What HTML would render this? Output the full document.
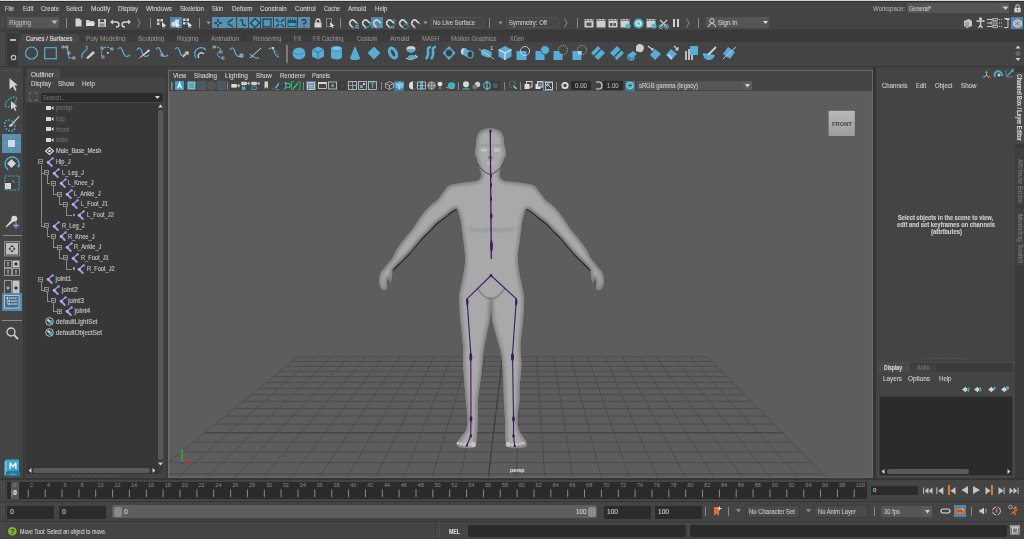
<!DOCTYPE html>
<html><head><meta charset="utf-8"><style>
html,body{margin:0;padding:0;}
body{width:1024px;height:539px;overflow:hidden;position:relative;background:#444444;font-family:"Liberation Sans",sans-serif;}
body>div,body>span,body>svg{position:absolute;}
.t{white-space:nowrap;line-height:1;transform-origin:0 0;-webkit-text-stroke:0.12px currentColor;}
svg{overflow:visible;}
</style></head><body>
<div style="left:0px;top:0px;width:1024px;height:1px;background:#d6d6d6;"></div>
<div style="left:0px;top:1px;width:1024px;height:1px;background:#2f2f2f;"></div>
<span class="t" style="left:5px;top:6px;font-size:6.6px;color:#cdcdcd;transform:scaleX(0.865);">File</span>
<span class="t" style="left:22.5px;top:6px;font-size:6.6px;color:#cdcdcd;transform:scaleX(0.923);">Edit</span>
<span class="t" style="left:40.7px;top:6px;font-size:6.6px;color:#cdcdcd;transform:scaleX(0.909);">Create</span>
<span class="t" style="left:66px;top:6px;font-size:6.6px;color:#cdcdcd;transform:scaleX(0.900);">Select</span>
<span class="t" style="left:90.7px;top:6px;font-size:6.6px;color:#cdcdcd;transform:scaleX(0.993);">Modify</span>
<span class="t" style="left:117.7px;top:6px;font-size:6.6px;color:#cdcdcd;transform:scaleX(0.924);">Display</span>
<span class="t" style="left:145.7px;top:6px;font-size:6.6px;color:#cdcdcd;transform:scaleX(0.971);">Windows</span>
<span class="t" style="left:179.7px;top:6px;font-size:6.6px;color:#cdcdcd;transform:scaleX(0.934);">Skeleton</span>
<span class="t" style="left:211.7px;top:6px;font-size:6.6px;color:#cdcdcd;transform:scaleX(0.880);">Skin</span>
<span class="t" style="left:231.5px;top:6px;font-size:6.6px;color:#cdcdcd;transform:scaleX(0.948);">Deform</span>
<span class="t" style="left:259.7px;top:6px;font-size:6.6px;color:#cdcdcd;transform:scaleX(0.949);">Constrain</span>
<span class="t" style="left:294.7px;top:6px;font-size:6.6px;color:#cdcdcd;transform:scaleX(0.978);">Control</span>
<span class="t" style="left:323.5px;top:6px;font-size:6.6px;color:#cdcdcd;transform:scaleX(0.849);">Cache</span>
<span class="t" style="left:347.7px;top:6px;font-size:6.6px;color:#cdcdcd;transform:scaleX(0.959);">Arnold</span>
<span class="t" style="left:374.5px;top:6px;font-size:6.6px;color:#cdcdcd;transform:scaleX(0.921);">Help</span>
<span class="t" style="left:873px;top:6px;font-size:6.6px;color:#a8a8a8;transform:scaleX(0.922);">Workspace:</span>
<div style="left:907px;top:3px;width:102.2px;height:9.8px;background:#555555;"></div>
<div style="left:999px;top:3px;width:10.2px;height:9.8px;background:#5a5a5a;"></div>
<span class="t" style="left:909px;top:6px;font-size:6.6px;color:#c8c8c8;transform:scaleX(0.845);">General*</span>
<svg style="left:1001.5px;top:6px;" width="7" height="5" viewBox="0 0 7 5"><path d="M0.5 0.5 L6.5 0.5 L3.5 4 Z" fill="#c8c8c8"/></svg>
<svg style="left:1013.5px;top:3.8px;" width="7" height="9" viewBox="0 0 7 9"><rect x="0.3" y="3.8" width="6.4" height="4.6" fill="#d0d0d0"/><path d="M1.8 3.8 V2.4 A1.7 1.7 0 0 1 5.2 2.4 V3.8" stroke="#d0d0d0" stroke-width="1.1" fill="none"/><rect x="3.1" y="5.2" width="0.9" height="1.6" fill="#444"/></svg>
<svg style="left:1px;top:17px;" width="4" height="12" viewBox="0 0 4 12"><rect x="0" y="0.0" width="1" height="1" fill="#5a5a5a"/><rect x="0" y="2.5" width="1" height="1" fill="#5a5a5a"/><rect x="0" y="5.0" width="1" height="1" fill="#5a5a5a"/><rect x="0" y="7.5" width="1" height="1" fill="#5a5a5a"/><rect x="2" y="0.0" width="1" height="1" fill="#5a5a5a"/><rect x="2" y="2.5" width="1" height="1" fill="#5a5a5a"/><rect x="2" y="5.0" width="1" height="1" fill="#5a5a5a"/><rect x="2" y="7.5" width="1" height="1" fill="#5a5a5a"/></svg>
<div style="left:7px;top:17px;width:52px;height:11px;background:#555555;"></div>
<div style="left:49px;top:17px;width:10px;height:11px;background:#5a5a5a;"></div>
<span class="t" style="left:9px;top:20px;font-size:6.6px;color:#b8b8b8;transform:scaleX(0.996);">Rigging</span>
<svg style="left:51px;top:20px;" width="7" height="5" viewBox="0 0 7 5"><path d="M0.5 0.5 L6.5 0.5 L3.5 4 Z" fill="#c0c0c0"/></svg>
<div style="left:66px;top:18px;width:1px;height:10px;background:#8a8a8a;"></div>
<svg style="left:75px;top:18px;" width="7" height="9" viewBox="0 0 7 9"><path d="M0.5 0.5 H4.5 L6.5 2.5 V8.5 H0.5 Z" fill="#d4d4d4"/></svg>
<svg style="left:86px;top:19px;" width="9" height="8" viewBox="0 0 9 8"><path d="M0 1 H3 L4 2 H8 V7 H0 Z" fill="#c8c8c8"/><path d="M1 3.5 H9 L8 7 H0 Z" fill="#e0e0e0"/></svg>
<svg style="left:98px;top:19px;" width="8" height="8" viewBox="0 0 8 8"><rect x="0" y="0" width="8" height="8" fill="#c8c8c8"/><rect x="2" y="0.5" width="4" height="2.5" fill="#444"/><rect x="1.5" y="4.5" width="5" height="3" fill="#888"/></svg>
<svg style="left:110px;top:19px;" width="10" height="8" viewBox="0 0 10 8"><path d="M2 3 H6 A3 2.5 0 0 1 6 8" stroke="#d0d0d0" stroke-width="1.5" fill="none"/><path d="M0 3 L3 0.5 V5.5Z" fill="#d0d0d0"/></svg>
<svg style="left:121px;top:19px;" width="10" height="8" viewBox="0 0 10 8"><path d="M8 3 H4 A3 2.5 0 0 0 4 8" stroke="#d0d0d0" stroke-width="1.5" fill="none"/><path d="M10 3 L7 0.5 V5.5Z" fill="#d0d0d0"/></svg>
<svg style="left:137px;top:18px;" width="4" height="10" viewBox="0 0 4 10"><path d="M0.5 0.5 L3 5 L0.5 9.5" stroke="#8a8a8a" fill="none"/></svg>
<div style="left:150px;top:18px;width:1px;height:10px;background:#8a8a8a;"></div>
<svg style="left:157px;top:18px;" width="10" height="10" viewBox="0 0 10 10"><rect x="0" y="1" width="2.5" height="2.5" fill="#d0d0d0"/><rect x="3.5" y="1" width="2.5" height="2.5" fill="#d0d0d0"/><rect x="0" y="4.5" width="2.5" height="2.5" fill="#d0d0d0"/><path d="M5 4 L9.5 8 L7 8 L8 10 L7 10 L6 8.3 L5 9.5 Z" fill="#e0e0e0"/></svg>
<div style="left:170px;top:17px;width:12px;height:11px;background:#4f87ab;"></div>
<svg style="left:171px;top:18px;" width="10" height="10" viewBox="0 0 10 10"><circle cx="3" cy="6" r="2.6" fill="#d8d8d8"/><rect x="4" y="1.5" width="4" height="4" fill="#d8d8d8"/><path d="M5 4 L9.5 8 L7 8 L8 10 L7 10 L6 8.3 L5 9.5 Z" fill="#eee"/></svg>
<svg style="left:183px;top:18px;" width="10" height="10" viewBox="0 0 10 10"><rect x="0" y="0.5" width="2.5" height="2.5" fill="#d0d0d0"/><rect x="3.5" y="0.5" width="2.5" height="2.5" fill="#d0d0d0"/><rect x="0" y="4" width="2.5" height="2.5" fill="#d0d0d0"/><rect x="3.5" y="4" width="2.5" height="2.5" fill="#4ab8c8"/><path d="M5 4 L9.5 8 L7 8 L8 10 L7 10 L6 8.3 L5 9.5 Z" fill="#e0e0e0"/></svg>
<div style="left:199px;top:18px;width:1px;height:10px;background:#8a8a8a;"></div>
<svg style="left:206px;top:21px;" width="5" height="4" viewBox="0 0 5 4"><path d="M0.5 0.5 L4.5 0.5 L2.5 3.5 Z" fill="#9a9a9a"/></svg>
<div style="left:212.0px;top:17px;width:11.6px;height:11px;background:#5a8fb0;"></div>
<svg style="left:212.0px;top:17px;" width="12" height="12" viewBox="0 0 12 12"><path d="M6 2 V10 M2 6 H10" stroke="#1f3f55" stroke-width="1.4"/><circle cx="6" cy="6" r="1" fill="#3ac"/></svg>
<div style="left:224.3px;top:17px;width:11.6px;height:11px;background:#5a8fb0;"></div>
<svg style="left:224.3px;top:17px;" width="12" height="12" viewBox="0 0 12 12"><path d="M9 2 L3 6 L9 10" stroke="#1f3f55" stroke-width="1.4" fill="none"/><circle cx="3" cy="6" r="1" fill="#3ac"/></svg>
<div style="left:236.6px;top:17px;width:11.6px;height:11px;background:#5a8fb0;"></div>
<svg style="left:236.6px;top:17px;" width="12" height="12" viewBox="0 0 12 12"><path d="M2 3 L5 3 L6 8 L10 9" stroke="#1f3f55" stroke-width="1.3" fill="none"/><circle cx="2.5" cy="3" r="1" fill="#3ac"/><circle cx="10" cy="9" r="1" fill="#3ac"/></svg>
<div style="left:248.9px;top:17px;width:11.6px;height:11px;background:#5a8fb0;"></div>
<svg style="left:248.9px;top:17px;" width="12" height="12" viewBox="0 0 12 12"><path d="M6 1.5 L10.5 6 L6 10.5 L1.5 6 Z" stroke="#1f3f55" stroke-width="1.2" fill="none"/><circle cx="6" cy="6" r="2" fill="#3ac"/></svg>
<div style="left:261.2px;top:17px;width:11.6px;height:11px;background:#5a8fb0;"></div>
<svg style="left:261.2px;top:17px;" width="12" height="12" viewBox="0 0 12 12"><rect x="2" y="2" width="8" height="8" stroke="#1f3f55" stroke-width="1.2" fill="none"/><path d="M4 8 L8 4 V8Z" fill="#3ac"/></svg>
<div style="left:273.5px;top:17px;width:11.6px;height:11px;background:#5a8fb0;"></div>
<svg style="left:273.5px;top:17px;" width="12" height="12" viewBox="0 0 12 12"><path d="M2 2 L10 10 M10 2 L2 10" stroke="#1f3f55" stroke-width="1.3"/><circle cx="6" cy="6" r="1.5" fill="#3ac"/></svg>
<div style="left:285.8px;top:17px;width:11.6px;height:11px;background:#5a8fb0;"></div>
<svg style="left:285.8px;top:17px;" width="12" height="12" viewBox="0 0 12 12"><rect x="1.5" y="3" width="9" height="7" fill="#2a5068"/><rect x="2.5" y="6" width="7" height="3" fill="#3ac"/><path d="M2 2 H10" stroke="#1f3f55" stroke-dasharray="1 1"/></svg>
<div style="left:298.1px;top:17px;width:11.6px;height:11px;background:#5a8fb0;"></div>
<svg style="left:298.1px;top:17px;" width="12" height="12" viewBox="0 0 12 12"><path d="M4 4 A2 2 0 1 1 6 6.5 V8 M6 9.5 V10.5" stroke="#1f3f55" stroke-width="1.4" fill="none"/></svg>
<svg style="left:314px;top:18px;" width="8" height="10" viewBox="0 0 8 10"><rect x="0.5" y="4.5" width="7" height="5" fill="#d8d8d8"/><path d="M2 4.5 V3 A2 2 0 0 1 6 3 V4.5" stroke="#d8d8d8" stroke-width="1.3" fill="none"/></svg>
<svg style="left:326px;top:18px;" width="9" height="10" viewBox="0 0 9 10"><rect x="0.5" y="0.5" width="5" height="8" fill="none" stroke="#bbb" stroke-dasharray="1 1"/><path d="M4 4 L8.5 8 L6.5 8 L7.5 10 L6.5 10 L5.5 8.3 L4.5 9.5 Z" fill="#e0e0e0"/></svg>
<div style="left:340px;top:18px;width:1px;height:10px;background:#8a8a8a;"></div>
<svg style="left:348px;top:17.5px;" width="12" height="11" viewBox="0 0 12 11"><g transform="rotate(-45 5 5.5)"><path d="M2 8 V5 A3 3 0 0 1 8 5 V8" stroke="#d0d0d0" stroke-width="1.7" fill="none"/><path d="M2 8 V9.5 M8 8 V9.5" stroke="#8a8a8a" stroke-width="1.7"/></g><path d="M7 7.5 H11 M7 9.5 H11 M8 6.5 V11 M10 6.5 V11" stroke="#3ab4c8" stroke-width="0.8"/></svg>
<svg style="left:360.5px;top:17.5px;" width="12" height="11" viewBox="0 0 12 11"><g transform="rotate(-45 5 5.5)"><path d="M2 8 V5 A3 3 0 0 1 8 5 V8" stroke="#d0d0d0" stroke-width="1.7" fill="none"/><path d="M2 8 V9.5 M8 8 V9.5" stroke="#8a8a8a" stroke-width="1.7"/></g><path d="M5 10 Q8 9 11 5" stroke="#3ab4c8" stroke-width="1" fill="none"/><circle cx="4" cy="10.5" r="0.8" fill="#3ab4c8"/></svg>
<div style="left:371.1px;top:16.5px;width:11.7px;height:11.2px;background:#4f87ab;"></div>
<svg style="left:372px;top:17.5px;" width="12" height="11" viewBox="0 0 12 11"><g transform="rotate(-45 5 5.5)"><path d="M2 8 V5 A3 3 0 0 1 8 5 V8" stroke="#d0d0d0" stroke-width="1.7" fill="none"/><path d="M2 8 V9.5 M8 8 V9.5" stroke="#8a8a8a" stroke-width="1.7"/></g><circle cx="8.5" cy="8.8" r="1.3" fill="#3ab4c8"/></svg>
<svg style="left:385px;top:17.5px;" width="12" height="11" viewBox="0 0 12 11"><g transform="rotate(-45 5 5.5)"><path d="M2 8 V5 A3 3 0 0 1 8 5 V8" stroke="#d0d0d0" stroke-width="1.7" fill="none"/><path d="M2 8 V9.5 M8 8 V9.5" stroke="#8a8a8a" stroke-width="1.7"/></g><circle cx="7.5" cy="9" r="1.2" fill="none" stroke="#3ab4c8" stroke-width="0.8"/><circle cx="9" cy="2.5" r="1" fill="none" stroke="#3ab4c8" stroke-width="0.7"/><path d="M5.5 9 H10" stroke="#3ab4c8" stroke-width="0.7"/></svg>
<svg style="left:397.5px;top:17.5px;" width="12" height="11" viewBox="0 0 12 11"><g transform="rotate(-45 5 5.5)"><path d="M2 8 V5 A3 3 0 0 1 8 5 V8" stroke="#d0d0d0" stroke-width="1.7" fill="none"/><path d="M2 8 V9.5 M8 8 V9.5" stroke="#8a8a8a" stroke-width="1.7"/></g><rect x="5.5" y="6.5" width="4.5" height="4" fill="none" stroke="#3ab4c8" stroke-width="0.8" transform="rotate(-45 7.75 8.5)"/></svg>
<svg style="left:410px;top:17.5px;" width="12" height="11" viewBox="0 0 12 11"><g transform="rotate(-45 5 5.5)"><path d="M2 8 V5 A3 3 0 0 1 8 5 V8" stroke="#d0d0d0" stroke-width="1.7" fill="none"/><path d="M2 8 V9.5 M8 8 V9.5" stroke="#8a8a8a" stroke-width="1.7"/></g></svg>
<svg style="left:423px;top:21px;" width="5" height="4" viewBox="0 0 5 4"><path d="M0.5 0.5 L4.5 0.5 L2.5 3.5 Z" fill="#9a9a9a"/></svg>
<div style="left:430px;top:16.5px;width:53.5px;height:11.5px;background:#464646;border:1px solid #545454;box-sizing:border-box;border-radius:2px"></div>
<span class="t" style="left:433.2px;top:20.2px;font-size:6.6px;color:#c4c4c4;transform:scaleX(0.894);">No Live Surface</span>
<div style="left:489px;top:18px;width:1px;height:10px;background:#8a8a8a;"></div>
<svg style="left:498px;top:21px;" width="5" height="4" viewBox="0 0 5 4"><path d="M0.5 0.5 L4.5 0.5 L2.5 3.5 Z" fill="#9a9a9a"/></svg>
<div style="left:506.4px;top:16.5px;width:52.2px;height:11.5px;background:#464646;border:1px solid #545454;box-sizing:border-box;border-radius:2px"></div>
<span class="t" style="left:508.8px;top:20.2px;font-size:6.6px;color:#c4c4c4;transform:scaleX(0.904);">Symmetry: Off</span>
<svg style="left:564px;top:18px;" width="4" height="10" viewBox="0 0 4 10"><path d="M0.5 0.5 L3 5 L0.5 9.5" stroke="#8a8a8a" fill="none"/></svg>
<div style="left:577px;top:18px;width:1px;height:10px;background:#8a8a8a;"></div>
<svg style="left:584px;top:18px;" width="10" height="10" viewBox="0 0 10 10"><rect x="0.5" y="3" width="9" height="6.5" fill="#cfcfcf"/><path d="M0.5 1 H9.5 V2.5 H0.5Z" fill="#cfcfcf"/><path d="M2 1 L3 2.5 M5 1 L6 2.5 M8 1 L9 2.5" stroke="#444" stroke-width="0.7"/><rect x="2.5" y="4.5" width="5" height="3.5" fill="#555"/></svg>
<svg style="left:596px;top:18px;" width="10" height="10" viewBox="0 0 10 10"><rect x="0.5" y="3" width="9" height="6.5" fill="#cfcfcf"/><path d="M0.5 1 H9.5 V2.5 H0.5Z" fill="#cfcfcf"/><path d="M2 1 L3 2.5 M5 1 L6 2.5 M8 1 L9 2.5" stroke="#444" stroke-width="0.7"/></svg>
<svg style="left:608px;top:18px;" width="10" height="10" viewBox="0 0 10 10"><rect x="0.5" y="3" width="9" height="6.5" fill="#cfcfcf"/><path d="M0.5 1 H9.5 V2.5 H0.5Z" fill="#cfcfcf"/><path d="M2 1 L3 2.5 M5 1 L6 2.5 M8 1 L9 2.5" stroke="#444" stroke-width="0.7"/><rect x="2" y="5" width="2.5" height="3" fill="#555"/><rect x="5.5" y="5" width="2.5" height="3" fill="#555"/></svg>
<svg style="left:620px;top:18px;" width="11" height="11" viewBox="0 0 11 11"><rect x="0.5" y="3" width="9" height="6.5" fill="#cfcfcf"/><path d="M0.5 1 H9.5 V2.5 H0.5Z" fill="#cfcfcf"/><path d="M2 1 L3 2.5 M5 1 L6 2.5 M8 1 L9 2.5" stroke="#444" stroke-width="0.7"/><circle cx="8" cy="8" r="2.5" fill="#4ab8c8"/></svg>
<svg style="left:633px;top:18px;" width="11" height="11" viewBox="0 0 11 11"><circle cx="5.5" cy="5.5" r="5" fill="#4ab8c8"/><circle cx="5.5" cy="5.5" r="3" fill="#eee"/><circle cx="5.5" cy="5.5" r="1.5" fill="#4ab8c8"/></svg>
<svg style="left:646px;top:18px;" width="11" height="11" viewBox="0 0 11 11"><rect x="0.5" y="3" width="9" height="6.5" fill="#cfcfcf"/><path d="M0.5 1 H9.5 V2.5 H0.5Z" fill="#cfcfcf"/><path d="M2 1 L3 2.5 M5 1 L6 2.5 M8 1 L9 2.5" stroke="#444" stroke-width="0.7"/><circle cx="8" cy="8" r="2.5" fill="#4ab8c8"/></svg>
<svg style="left:658px;top:18px;" width="11" height="11" viewBox="0 0 11 11"><path d="M2 9 L9 2 M2 2 L9 9" stroke="#ccc" stroke-width="1.2"/><circle cx="3" cy="8.5" r="2" stroke="#4ab8c8" fill="none"/><circle cx="8.5" cy="8.5" r="2" stroke="#4ab8c8" fill="none"/></svg>
<svg style="left:672px;top:19px;" width="8" height="9" viewBox="0 0 8 9"><rect x="1" y="0" width="2" height="8" fill="#cfcfcf"/><rect x="5" y="0" width="2" height="8" fill="#cfcfcf"/></svg>
<svg style="left:686px;top:18px;" width="4" height="10" viewBox="0 0 4 10"><path d="M0.5 0.5 L3 5 L0.5 9.5" stroke="#8a8a8a" fill="none"/></svg>
<div style="left:698px;top:18px;width:1px;height:10px;background:#8a8a8a;"></div>
<div style="left:705.5px;top:16.7px;width:63.6px;height:11px;background:#555555;"></div>
<svg style="left:763px;top:20.6px;" width="5" height="3" viewBox="0 0 5 3"><path d="M0 0 H5 L2.5 3Z" fill="#e0e0e0"/></svg>
<svg style="left:708px;top:18px;" width="8" height="9" viewBox="0 0 8 9"><circle cx="4" cy="2.8" r="2.2" stroke="#d0d0d0" stroke-width="1" fill="none"/><path d="M0.5 9 A3.5 3.5 0 0 1 7.5 9" stroke="#d0d0d0" stroke-width="1" fill="none"/></svg>
<span class="t" style="left:717.6px;top:20.3px;font-size:6.6px;color:#c8c8c8;transform:scaleX(0.949);">Sign In</span>
<svg style="left:963px;top:18px;" width="10" height="10" viewBox="0 0 10 10"><path d="M1 3 L6 1 L9 3 V8 L4 10 L1 8Z" fill="#c8c8c8"/><path d="M3 4 V9 M5 3.5 V9.5" stroke="#444" stroke-width="0.6"/></svg>
<svg style="left:976px;top:17px;" width="9" height="12" viewBox="0 0 9 12"><circle cx="4.5" cy="1.8" r="1.5" fill="#d0d0d0"/><path d="M0.5 4 H8.5 M4.5 4 V8 M2.5 11 L4.5 8 L6.5 11" stroke="#d0d0d0" stroke-width="1.3" fill="none"/></svg>
<svg style="left:987px;top:18px;" width="11" height="10" viewBox="0 0 11 10"><path d="M0 1.5 H6 M0 5 H4 M0 8.5 H6" stroke="#c8c8c8" stroke-width="1"/><rect x="6" y="0.5" width="4.5" height="2" fill="none" stroke="#c8c8c8" stroke-width="0.8"/><rect x="4" y="4" width="6" height="2" fill="none" stroke="#c8c8c8" stroke-width="0.8"/><rect x="6" y="7.5" width="4.5" height="2" fill="none" stroke="#c8c8c8" stroke-width="0.8"/></svg>
<svg style="left:999px;top:18px;" width="10" height="10" viewBox="0 0 10 10"><path d="M0 1.5 H3 M0 5 H3 M0 8.5 H3" stroke="#c8c8c8" stroke-dasharray="1 1"/><path d="M5 0.5 H9 V9.5 H5" stroke="#c8c8c8" fill="none"/><rect x="6.5" y="0" width="4" height="2" fill="#c8c8c8"/></svg>
<div style="left:1011px;top:17px;width:12.2px;height:12px;background:#4f87ab;"></div>
<svg style="left:1012.6px;top:18.5px;" width="9" height="9" viewBox="0 0 9 9"><path d="M4.5 0.3 L8.7 2.5 V6.5 L4.5 8.7 L0.3 6.5 V2.5Z" fill="#c0c0c0" stroke="#e0e0e0" stroke-width="0.5"/><path d="M4.5 1.5 V7.5 M1.5 3 L7.5 6 M7.5 3 L1.5 6" stroke="#666" stroke-width="0.5"/></svg>
<div style="left:0px;top:30px;width:1024px;height:1px;background:#363636;"></div>
<div style="left:0px;top:31px;width:1024px;height:35px;background:#444444;"></div>
<svg style="left:1px;top:33px;" width="4" height="32" viewBox="0 0 4 32"><rect x="0" y="0.0" width="1" height="1" fill="#5a5a5a"/><rect x="0" y="2.5" width="1" height="1" fill="#5a5a5a"/><rect x="0" y="5.0" width="1" height="1" fill="#5a5a5a"/><rect x="0" y="7.5" width="1" height="1" fill="#5a5a5a"/><rect x="0" y="10.0" width="1" height="1" fill="#5a5a5a"/><rect x="0" y="12.5" width="1" height="1" fill="#5a5a5a"/><rect x="0" y="15.0" width="1" height="1" fill="#5a5a5a"/><rect x="0" y="17.5" width="1" height="1" fill="#5a5a5a"/><rect x="0" y="20.0" width="1" height="1" fill="#5a5a5a"/><rect x="0" y="22.5" width="1" height="1" fill="#5a5a5a"/><rect x="0" y="25.0" width="1" height="1" fill="#5a5a5a"/><rect x="0" y="27.5" width="1" height="1" fill="#5a5a5a"/><rect x="2" y="0.0" width="1" height="1" fill="#5a5a5a"/><rect x="2" y="2.5" width="1" height="1" fill="#5a5a5a"/><rect x="2" y="5.0" width="1" height="1" fill="#5a5a5a"/><rect x="2" y="7.5" width="1" height="1" fill="#5a5a5a"/><rect x="2" y="10.0" width="1" height="1" fill="#5a5a5a"/><rect x="2" y="12.5" width="1" height="1" fill="#5a5a5a"/><rect x="2" y="15.0" width="1" height="1" fill="#5a5a5a"/><rect x="2" y="17.5" width="1" height="1" fill="#5a5a5a"/><rect x="2" y="20.0" width="1" height="1" fill="#5a5a5a"/><rect x="2" y="22.5" width="1" height="1" fill="#5a5a5a"/><rect x="2" y="25.0" width="1" height="1" fill="#5a5a5a"/><rect x="2" y="27.5" width="1" height="1" fill="#5a5a5a"/></svg>
<div style="left:7.4px;top:32.5px;width:10.6px;height:33px;background:#383838;"></div>
<div style="left:10px;top:38.8px;width:5.6px;height:2.5px;background:#b8b8b8;"></div>
<svg style="left:10px;top:54px;" width="7" height="7" viewBox="0 0 7 7"><circle cx="3.5" cy="3.5" r="2.2" stroke="#bdbdbd" stroke-width="1.3" fill="none"/></svg>
<div style="left:19px;top:31px;width:1005px;height:11px;background:#3a3a3a;"></div>
<div style="left:20.5px;top:34px;width:58.0px;height:8px;background:#484848;border-radius:2px 2px 0 0"></div>
<span class="t" style="left:26px;top:36px;font-size:6.6px;color:#e0e0e0;transform:scaleX(0.887);">Curves / Surfaces</span>
<div style="left:79px;top:34px;width:51.5px;height:8px;background:#3d3d3d;border-radius:2px 2px 0 0"></div>
<span class="t" style="left:85.5px;top:36px;font-size:6.6px;color:#8e8e8e;transform:scaleX(0.953);">Poly Modeling</span>
<div style="left:131.8px;top:34px;width:37.599999999999994px;height:8px;background:#3d3d3d;border-radius:2px 2px 0 0"></div>
<span class="t" style="left:137.5px;top:36px;font-size:6.6px;color:#8e8e8e;transform:scaleX(0.969);">Sculpting</span>
<div style="left:170.8px;top:34px;width:34.19999999999999px;height:8px;background:#3d3d3d;border-radius:2px 2px 0 0"></div>
<span class="t" style="left:176.75px;top:36px;font-size:6.6px;color:#8e8e8e;transform:scaleX(0.961);">Rigging</span>
<div style="left:206px;top:34px;width:37px;height:8px;background:#3d3d3d;border-radius:2px 2px 0 0"></div>
<span class="t" style="left:211.25px;top:36px;font-size:6.6px;color:#8e8e8e;transform:scaleX(0.954);">Animation</span>
<div style="left:245.5px;top:34px;width:41.5px;height:8px;background:#3d3d3d;border-radius:2px 2px 0 0"></div>
<span class="t" style="left:252.7px;top:36px;font-size:6.6px;color:#8e8e8e;transform:scaleX(0.936);">Rendering</span>
<div style="left:287px;top:34px;width:19px;height:8px;background:#3d3d3d;border-radius:2px 2px 0 0"></div>
<span class="t" style="left:293.5px;top:36px;font-size:6.6px;color:#8e8e8e;transform:scaleX(0.889);">FX</span>
<div style="left:307px;top:34px;width:42px;height:8px;background:#3d3d3d;border-radius:2px 2px 0 0"></div>
<span class="t" style="left:313px;top:36px;font-size:6.6px;color:#8e8e8e;transform:scaleX(0.885);">FX Caching</span>
<div style="left:350px;top:34px;width:33px;height:8px;background:#3d3d3d;border-radius:2px 2px 0 0"></div>
<span class="t" style="left:356.5px;top:36px;font-size:6.6px;color:#8e8e8e;transform:scaleX(0.902);">Custom</span>
<div style="left:384px;top:34px;width:31px;height:8px;background:#3d3d3d;border-radius:2px 2px 0 0"></div>
<span class="t" style="left:389.75px;top:36px;font-size:6.6px;color:#8e8e8e;transform:scaleX(1.012);">Arnold</span>
<div style="left:416px;top:34px;width:28px;height:8px;background:#3d3d3d;border-radius:2px 2px 0 0"></div>
<span class="t" style="left:421.5px;top:36px;font-size:6.6px;color:#8e8e8e;transform:scaleX(0.892);">MASH</span>
<div style="left:445px;top:34px;width:58px;height:8px;background:#3d3d3d;border-radius:2px 2px 0 0"></div>
<span class="t" style="left:451px;top:36px;font-size:6.6px;color:#8e8e8e;transform:scaleX(0.947);">Motion Graphics</span>
<div style="left:504px;top:34px;width:25.5px;height:8px;background:#3d3d3d;border-radius:2px 2px 0 0"></div>
<span class="t" style="left:509.75px;top:36px;font-size:6.6px;color:#8e8e8e;transform:scaleX(0.830);">XGen</span>
<div style="left:19px;top:42px;width:1005px;height:24px;background:#444444;"></div>
<svg style="left:25px;top:45.3px;" width="16" height="18" viewBox="0 0 16 18"><circle cx="6.5" cy="8" r="6" stroke="#56aed8" stroke-width="1.2" fill="none"/></svg>
<svg style="left:44px;top:45.3px;" width="16" height="18" viewBox="0 0 16 18"><rect x="0.7" y="2.7" width="11.6" height="11" stroke="#56aed8" stroke-width="1.2" fill="none"/></svg>
<svg style="left:62px;top:45.3px;" width="16" height="18" viewBox="0 0 16 18"><path d="M1 2 H5 L6 7 L7 13 H12" stroke="#56aed8" stroke-width="1.2" fill="none"/><rect x="0" y="1" width="2" height="2" fill="none" stroke="#ccc" stroke-width="0.6"/><rect x="4" y="1" width="2" height="2" fill="none" stroke="#ccc" stroke-width="0.6"/><rect x="6" y="7" width="2" height="2" fill="none" stroke="#ccc" stroke-width="0.6"/><rect x="11" y="12" width="2" height="2" fill="none" stroke="#ccc" stroke-width="0.6"/></svg>
<svg style="left:81px;top:45.3px;" width="16" height="18" viewBox="0 0 16 18"><path d="M1 13 Q0 9 4 6 Q8 3 5 1" stroke="#56aed8" stroke-width="1.25" fill="none"/><path d="M5 13 L12 6 L14 8 L7 14 Z" fill="#d0d0d0"/></svg>
<svg style="left:100px;top:45.3px;" width="16" height="18" viewBox="0 0 16 18"><path d="M2 11 Q0 4 6 2 Q10 2 12 5" stroke="#56aed8" stroke-width="1.2" fill="none" stroke-dasharray="2 1"/><rect x="1" y="2" width="2" height="2" fill="none" stroke="#ccc" stroke-width="0.6"/><rect x="11" y="3" width="2" height="2" fill="none" stroke="#ccc" stroke-width="0.6"/><rect x="2" y="11" width="2" height="2" fill="none" stroke="#ccc" stroke-width="0.6"/><rect x="7" y="7" width="1.6" height="1.6" fill="#ddd"/></svg>
<svg style="left:117px;top:45.3px;" width="16" height="18" viewBox="0 0 16 18"><path d="M1 4 Q4 0 6 7 Q8 14 13 10" stroke="#56aed8" stroke-width="1.25" fill="none"/></svg>
<svg style="left:136px;top:45.3px;" width="16" height="18" viewBox="0 0 16 18"><path d="M1 5 Q4 0 6 7 Q8 14 13 10" stroke="#56aed8" stroke-width="1.25" fill="none"/><path d="M2 14 L13 4 L14 6 L4 13Z" fill="#d4d4d4"/></svg>
<svg style="left:155px;top:45.3px;" width="16" height="18" viewBox="0 0 16 18"><path d="M1 4 Q4 0 6 7 Q8 14 13 10" stroke="#56aed8" stroke-width="1.25" fill="none"/><rect x="6" y="9" width="2" height="2" fill="none" stroke="#ccc" stroke-width="0.6"/></svg>
<svg style="left:174px;top:45.3px;" width="16" height="18" viewBox="0 0 16 18"><path d="M1 4 Q4 0 6 7 Q8 14 11 8" stroke="#56aed8" stroke-width="1.25" fill="none"/><path d="M9 12 L14 7 M11 7 H14 V10" stroke="#d4d4d4" stroke-width="1.2" fill="none"/></svg>
<svg style="left:194px;top:45.3px;" width="16" height="18" viewBox="0 0 16 18"><path d="M2 13 A6 6 0 0 1 12 5" stroke="#56aed8" stroke-width="1.25" fill="none"/><path d="M5 13 A3 3 0 0 1 10 9" stroke="#d0d0d0" stroke-width="1.3" fill="none"/></svg>
<svg style="left:211px;top:45.3px;" width="16" height="18" viewBox="0 0 16 18"><path d="M3 2 Q12 2 8 7 Q4 11 11 13" stroke="#56aed8" stroke-width="1.3" fill="none" stroke-dasharray="2 1"/><rect x="2" y="1" width="2" height="2" fill="none" stroke="#ccc" stroke-width="0.6"/><rect x="9" y="6" width="2" height="2" fill="none" stroke="#ccc" stroke-width="0.6"/><rect x="11" y="12" width="2" height="2" fill="none" stroke="#ccc" stroke-width="0.6"/></svg>
<svg style="left:229px;top:45.3px;" width="16" height="18" viewBox="0 0 16 18"><path d="M1 5 Q4 0 6 7 Q8 14 13 10" stroke="#56aed8" stroke-width="1.25" fill="none"/><rect x="11" y="9" width="3" height="3" fill="#888" stroke="#ccc" stroke-width="0.6"/></svg>
<svg style="left:249px;top:45.3px;" width="16" height="18" viewBox="0 0 16 18"><path d="M1 13 L12 3" stroke="#d0d0d0" stroke-width="1"/><path d="M1 9 Q5 14 10 13" stroke="#56aed8" stroke-width="1.3" fill="none"/></svg>
<svg style="left:267px;top:45.3px;" width="16" height="18" viewBox="0 0 16 18"><path d="M2 4 Q6 1 7 6 Q8 11 12 12" stroke="#56aed8" stroke-width="1.2" fill="none"/><path d="M6 3 L12 10" stroke="#bbb" stroke-width="0.8" stroke-dasharray="1 1"/><rect x="5" y="2" width="2" height="2" fill="#ccc"/></svg>
<div style="left:286px;top:45px;width:1.6px;height:18px;background:#7a7a7a;"></div>
<svg style="left:292px;top:45.3px;" width="16" height="18" viewBox="0 0 16 18"><ellipse cx="7" cy="8.5" rx="6.5" ry="6" fill="#56aed8"/><path d="M1 8 Q7 11 13 8" stroke="#3a7fa3" stroke-width="0.8" fill="none"/></svg>
<svg style="left:311px;top:45.3px;" width="16" height="18" viewBox="0 0 16 18"><path d="M7 1.5 L13 4.5 V11.5 L7 14.5 L1 11.5 V4.5Z" fill="#56aed8"/><path d="M1 4.5 L7 7.5 L13 4.5 M7 7.5 V14.5" stroke="#2f6e90" stroke-width="0.9" fill="none"/></svg>
<svg style="left:330px;top:45.3px;" width="16" height="18" viewBox="0 0 16 18"><path d="M1 3.5 V12 A5.5 2.5 0 0 0 12 12 V3.5Z" fill="#56aed8"/><ellipse cx="6.5" cy="3.5" rx="5.5" ry="2.5" fill="#6cc4ea" stroke="#2f6e90" stroke-width="0.6"/></svg>
<svg style="left:349px;top:45.3px;" width="16" height="18" viewBox="0 0 16 18"><path d="M6 1 L11 13 A5 2 0 0 1 1 13Z" fill="#56aed8"/></svg>
<svg style="left:367px;top:45.3px;" width="16" height="18" viewBox="0 0 16 18"><path d="M7 1.5 L13.5 8 L7 14.5 L0.5 8Z" fill="#56aed8"/></svg>
<svg style="left:387px;top:45.3px;" width="16" height="18" viewBox="0 0 16 18"><g transform="rotate(-28 6 8)"><ellipse cx="6" cy="8" rx="4.6" ry="6.8" fill="#56aed8"/><ellipse cx="6" cy="8" rx="1.5" ry="3.8" fill="#444"/></g></svg>
<svg style="left:405px;top:45.3px;" width="16" height="18" viewBox="0 0 16 18"><ellipse cx="6" cy="4" rx="4.5" ry="3" fill="#d0d0d0"/><path d="M2 4 Q6 12 10 4" fill="#56aed8"/><path d="M1 13 Q6 16 12 12 L10 10" stroke="#ccc" stroke-width="1.2" fill="none"/><ellipse cx="7" cy="12" rx="4" ry="2" fill="#56aed8"/></svg>
<svg style="left:424px;top:45.3px;" width="16" height="18" viewBox="0 0 16 18"><path d="M7 2 Q3 2 4 6 Q5 10 2 14" stroke="#56aed8" stroke-width="2.6" fill="none"/><path d="M12 2 Q8 2 9 6 Q10 10 7 14" stroke="#56aed8" stroke-width="2.6" fill="none"/></svg>
<svg style="left:442px;top:45.3px;" width="16" height="18" viewBox="0 0 16 18"><path d="M7 1 L13.5 8 L7 15 L0.5 8Z" fill="#56aed8"/><circle cx="7" cy="8" r="3.4" fill="#3a3a3a" stroke="#3d8ab0" stroke-width="0.6"/></svg>
<svg style="left:460px;top:45.3px;" width="16" height="18" viewBox="0 0 16 18"><ellipse cx="4" cy="6.5" rx="3.2" ry="3.5" fill="#d0d0d0"/><path d="M4 3 L10 6 L9 13 L3 10Z" fill="#56aed8"/><ellipse cx="10" cy="9.5" rx="3" ry="3.5" fill="#3a3a3a" stroke="#56aed8" stroke-width="1.2"/></svg>
<svg style="left:478px;top:45.3px;" width="18" height="18" viewBox="0 0 18 18"><rect x="3" y="5" width="11" height="7" rx="3.5" fill="#56aed8" transform="rotate(20 9 8)"/><path d="M1 4 L16 14" stroke="#d0d0d0" stroke-width="0.8"/><text x="12" y="5" font-size="6" fill="#ddd" font-family="Liberation Sans">1</text></svg>
<svg style="left:498px;top:45.3px;" width="16" height="18" viewBox="0 0 16 18"><path d="M7 1 L13.5 4.5 V11.5 L7 15 L0.5 11.5 V4.5Z" fill="#56aed8"/><path d="M0.5 4.5 L7 8 L13.5 4.5 M7 8 V15" stroke="#ddd" stroke-width="1.3" fill="none"/></svg>
<svg style="left:516px;top:45.3px;" width="16" height="18" viewBox="0 0 16 18"><rect x="0.5" y="6" width="10" height="9" fill="#56aed8"/><circle cx="9" cy="6" r="4.5" fill="none" stroke="#d0d0d0" stroke-width="0.9"/></svg>
<svg style="left:535px;top:45.3px;" width="16" height="18" viewBox="0 0 16 18"><rect x="0.5" y="6" width="9" height="9" fill="#56aed8"/><circle cx="10" cy="5" r="4.5" fill="#56aed8" stroke="#444" stroke-width="0.8"/></svg>
<svg style="left:553px;top:45.3px;" width="16" height="18" viewBox="0 0 16 18"><rect x="0.5" y="6" width="9" height="9" fill="#56aed8"/><circle cx="10" cy="5" r="4.5" fill="#444" stroke="#ccc" stroke-width="0.8" stroke-dasharray="1.3 1"/></svg>
<svg style="left:572px;top:45.3px;" width="16" height="18" viewBox="0 0 16 18"><rect x="0.5" y="6" width="9" height="9" fill="#56aed8"/><path d="M6 6 H9.5 V9.5 H6Z" fill="#ccc"/><circle cx="10" cy="5" r="4.5" fill="none" stroke="#ccc" stroke-width="0.8" stroke-dasharray="1.3 1"/></svg>
<svg style="left:591px;top:45.3px;" width="16" height="18" viewBox="0 0 16 18"><path d="M7 1 L14 8 L7 15 L0 8Z" fill="#56aed8"/><path d="M3 11 L11 3" stroke="#444" stroke-width="1.2"/></svg>
<svg style="left:610px;top:45.3px;" width="16" height="18" viewBox="0 0 16 18"><path d="M7 1 L14 8 L7 15 L0 8Z" fill="#56aed8"/><path d="M4 12 L12 4" stroke="#444" stroke-width="1.5"/></svg>
<svg style="left:627px;top:45.3px;" width="16" height="18" viewBox="0 0 16 18"><path d="M9 2 A4 4 0 1 1 12 7 L9 6Z" fill="#d0d0d0"/><path d="M1 10 L6 6 L10 9 L4 14Z" fill="#56aed8"/><ellipse cx="4" cy="12" rx="3" ry="3" fill="none" stroke="#56aed8" stroke-width="1.3"/></svg>
<svg style="left:647px;top:45.3px;" width="16" height="18" viewBox="0 0 16 18"><path d="M1 1 L6 5 M4 5 H6 V3" stroke="#ccc" stroke-width="1.2" fill="none"/><path d="M8 4 L14 9 L8 15 L3 10Z" fill="#56aed8"/></svg>
<svg style="left:665px;top:45.3px;" width="16" height="18" viewBox="0 0 16 18"><path d="M9 1 L13 5 M13 2 V5 H10" stroke="#ccc" stroke-width="1.2" fill="none"/><path d="M6 4 L12 9 L6 15 L1 10Z" fill="#56aed8"/><path d="M3 9 L7 14" stroke="#ccc" stroke-width="2"/></svg>
<svg style="left:684px;top:45.3px;" width="16" height="18" viewBox="0 0 16 18"><rect x="6" y="1" width="8" height="9" fill="#56aed8"/><rect x="1" y="6" width="2" height="9" fill="#bbb"/><rect x="4" y="4" width="2" height="11" fill="#bbb"/><rect x="7" y="10" width="2" height="5" fill="#bbb"/></svg>
<svg style="left:702px;top:45.3px;" width="16" height="18" viewBox="0 0 16 18"><path d="M1 8 A6 6 0 0 0 13 10 L7 9Z" fill="#56aed8"/><path d="M6 10 L14 2" stroke="#d0d0d0" stroke-width="1.8"/></svg>
<svg style="left:722px;top:45.3px;" width="16" height="18" viewBox="0 0 16 18"><path d="M6 2 L13 7 L8 14 L1 9Z" fill="#56aed8"/><path d="M1 14 L14 2" stroke="#cfcfcf" stroke-width="0.9"/></svg>
<svg style="left:1015px;top:45px;" width="6" height="17" viewBox="0 0 6 17"><path d="M0.5 3.5 L3 0.5 L5.5 3.5Z" fill="#cfcfcf"/><circle cx="3" cy="8.5" r="2.5" fill="#666"/><path d="M0.5 13 L3 16 L5.5 13Z" fill="#cfcfcf"/></svg>
<div style="left:0px;top:66px;width:1024px;height:1px;background:#363636;"></div>
<div style="left:0px;top:67px;width:24px;height:412px;background:#444444;"></div>
<div style="left:23px;top:67px;width:2px;height:412px;background:#373737;"></div>
<svg style="left:2px;top:70px;" width="20" height="2" viewBox="0 0 20 2"><rect x="0.0" y="0" width="1" height="1" fill="#5e5e5e"/><rect x="2.5" y="0" width="1" height="1" fill="#5e5e5e"/><rect x="5.0" y="0" width="1" height="1" fill="#5e5e5e"/><rect x="7.5" y="0" width="1" height="1" fill="#5e5e5e"/><rect x="10.0" y="0" width="1" height="1" fill="#5e5e5e"/><rect x="12.5" y="0" width="1" height="1" fill="#5e5e5e"/><rect x="15.0" y="0" width="1" height="1" fill="#5e5e5e"/><rect x="17.5" y="0" width="1" height="1" fill="#5e5e5e"/></svg>
<svg style="left:8.5px;top:77.5px;" width="10" height="14" viewBox="0 0 10 14"><path d="M0.5 0.3 L8.8 7.3 L5.6 7.6 L7.6 12 L6 12.9 L4 8.6 L0.5 11.2 Z" fill="#d2d2d2"/></svg>
<svg style="left:3px;top:95px;" width="17" height="17" viewBox="0 0 17 17"><ellipse cx="7.8" cy="7" rx="6.8" ry="3.3" stroke="#3ab4c8" stroke-width="1.3" stroke-dasharray="1.8 1.1" fill="none" transform="rotate(-38 7.8 7)"/><path d="M8 6 L14.5 11.5 L11.8 11.7 L13.3 15.3 L12 16 L10.5 12.5 L8 14.6 Z" fill="#d2d2d2"/></svg>
<svg style="left:3px;top:115px;" width="17" height="18" viewBox="0 0 17 18"><ellipse cx="6.8" cy="10.5" rx="4.6" ry="6" stroke="#3ab4c8" stroke-width="1.4" stroke-dasharray="1.8 1.2" fill="none" transform="rotate(-40 6.8 10.5)"/><path d="M15.8 1 L16.6 1.8 L10 9 L9 8.2 Z" fill="#d2d2d2"/><path d="M5.5 11.5 Q7 8 10 8.7 Q10 12 5.5 11.5Z" fill="#d2d2d2"/></svg>
<div style="left:2px;top:134px;width:19px;height:19px;background:#5a8fb0;"></div>
<svg style="left:3px;top:135px;" width="17" height="17" viewBox="0 0 17 17"><rect x="5" y="5" width="7" height="7" fill="#d8d8d8"/><path d="M8.5 0.5 L10.5 3 H6.5Z M8.5 16.5 L10.5 14 H6.5Z M0.5 8.5 L3 6.5 V10.5Z M16.5 8.5 L14 6.5 V10.5Z" fill="#3ab4c8"/></svg>
<svg style="left:3px;top:155px;" width="18" height="18" viewBox="0 0 18 18"><path d="M5.2 14.8 A7 7 0 1 1 15.3 12.2" stroke="#3ab4c8" stroke-width="1.4" fill="none"/><circle cx="15.6" cy="11" r="1.3" fill="#3ab4c8"/><path d="M8.5 4 L13 8.5 L8.5 13 L4 8.5Z" fill="#d4d4d4"/></svg>
<svg style="left:4px;top:175px;" width="16" height="16" viewBox="0 0 16 16"><rect x="1" y="1" width="14" height="14" stroke="#3ab4c8" stroke-width="1.2" stroke-dasharray="1.6 1.2" fill="none"/><rect x="1" y="8" width="6" height="6" fill="#d4d4d4"/><path d="M8 6 H10 V8" stroke="#3ab4c8" stroke-width="0.9" fill="none"/></svg>
<svg style="left:4px;top:215px;" width="16" height="14" viewBox="0 0 16 14"><path d="M1.5 11.8 L8.8 3.2 L11 5.2 L2.2 12.5Z" fill="#d2d2d2"/><circle cx="10.3" cy="3.8" r="3" fill="#d6d6d6"/><path d="M12 7.5 V13.5 M9 10.5 H15" stroke="#b68ee8" stroke-width="1.3"/></svg>
<div style="left:3px;top:235px;width:18.5px;height:1px;background:#8a8a8a;"></div>
<svg style="left:4px;top:240.5px;" width="16" height="15" viewBox="0 0 16 15"><rect x="0.5" y="0.5" width="15" height="14.5" fill="#555" stroke="#9a9a9a" stroke-width="0.8"/><rect x="2" y="2" width="12" height="11.5" fill="#bdbdbd"/><path d="M8 4 L9.8 6 H6.2Z M8 11.5 L9.8 9.5 H6.2Z M4.5 7.75 L6.5 6 V9.5Z M11.5 7.75 L9.5 6 V9.5Z" fill="#333"/></svg>
<svg style="left:4px;top:260px;" width="16" height="16" viewBox="0 0 16 16"><rect x="0.5" y="0.5" width="7" height="7" fill="#444" stroke="#aaa" stroke-width="0.8"/><rect x="8.5" y="0.5" width="7" height="7" fill="#c4c4c4"/><rect x="0.5" y="8.5" width="7" height="7" fill="#444" stroke="#aaa" stroke-width="0.8"/><rect x="8.5" y="8.5" width="7" height="7" fill="#444" stroke="#aaa" stroke-width="0.8"/><path d="M4 2 V6.5 M4 10 V14.5 M12 10 V14.5" stroke="#bbb" stroke-width="0.9"/><path d="M3 3 L4 2 L5 3 M3 11 L4 10 L5 11 M11 11 L12 10 L13 11" stroke="#bbb" stroke-width="0.7" fill="none"/><path d="M12 2 L14 4 L12 6 L10 4Z" fill="#333"/></svg>
<svg style="left:4px;top:280px;" width="16" height="16" viewBox="0 0 16 16"><rect x="0.5" y="0.5" width="7" height="15" fill="#444" stroke="#aaa" stroke-width="0.8"/><rect x="8.5" y="0.5" width="7" height="15" fill="#c4c4c4"/><path d="M2 8 H6 M4 6 V10" stroke="#ccc" stroke-width="0.8"/><path d="M12 6 L14 8 L12 10 L10 8Z" fill="#333"/></svg>
<div style="left:2px;top:293px;width:19.5px;height:17.5px;background:#4f8ab2;"></div>
<svg style="left:4px;top:295px;" width="15.5" height="13.5" viewBox="0 0 15.5 13.5"><rect x="0.5" y="0.5" width="14.5" height="12.5" fill="#3f6f90" stroke="#c8c8c8" stroke-width="0.9"/><circle cx="3.3" cy="3" r="1.1" fill="#ddd"/><rect x="5" y="2.3" width="8" height="1.5" fill="#aaa"/><circle cx="5.3" cy="6" r="1.1" fill="#ddd"/><rect x="7" y="5.3" width="6.5" height="1.5" fill="#aaa"/><circle cx="5.3" cy="9" r="1.1" fill="#ddd"/><rect x="7" y="8.3" width="6.5" height="1.5" fill="#aaa"/><path d="M3.3 4 V9 H4.3 M3.3 6 H4.3" stroke="#ccc" stroke-width="0.6" fill="none"/></svg>
<div style="left:2px;top:320px;width:19.5px;height:1px;background:#8a8a8a;"></div>
<svg style="left:5.5px;top:326.5px;" width="13" height="13" viewBox="0 0 13 13"><circle cx="5" cy="5" r="4" stroke="#d0d0d0" stroke-width="1.3" fill="none"/><path d="M8 8 L12 12" stroke="#d0d0d0" stroke-width="1.8"/></svg>
<svg style="left:3.5px;top:458.5px;" width="17" height="18" viewBox="0 0 17 18"><path d="M0.5 2.5 L3 0.5 V15 L0.5 16.8Z" fill="#62bfe4"/><path d="M3 0.5 H15 V12.5 H3Z" fill="#35a2d2"/><path d="M2 12.5 H16 V17.5 H2Z" fill="#2676a0"/><path d="M5.4 10 V3.6 H7.1 L9 6.6 L10.9 3.6 H12.6 V10 H11.1 V6 L9 9 L6.9 6 V10Z" fill="#f4f4f4"/><path d="M6 15.2 H12" stroke="#9cc8de" stroke-width="1" stroke-dasharray="1 0.5"/></svg>
<div style="left:25px;top:69px;width:140px;height:410px;background:#444444;"></div>
<div style="left:165px;top:67px;width:3px;height:412px;background:#3c3c3c;"></div>
<div style="left:25px;top:67px;width:140px;height:11px;background:#3c3c3c;"></div>
<div style="left:26.5px;top:69px;width:33px;height:9px;background:#4a4a4a;border-radius:2px 2px 0 0"></div>
<span class="t" style="left:30.9px;top:71.8px;font-size:6.6px;color:#d0d0d0;transform:scaleX(0.995);">Outliner</span>
<span class="t" style="left:30.5px;top:81px;font-size:6.6px;color:#cdcdcd;transform:scaleX(0.924);">Display</span>
<span class="t" style="left:57.7px;top:81px;font-size:6.6px;color:#cdcdcd;transform:scaleX(0.987);">Show</span>
<span class="t" style="left:81.5px;top:81px;font-size:6.6px;color:#cdcdcd;transform:scaleX(0.958);">Help</span>
<svg style="left:29px;top:92.3px;" width="8.5" height="9" viewBox="0 0 8.5 9"><path d="M0.5 2.5 V0.5 H2.5 M6 0.5 H8 V2.5 M8 6.5 V8.5 H6 M2.5 8.5 H0.5 V6.5" stroke="#7a7a7a" stroke-width="0.9" fill="none"/><path d="M0.5 4 V5 M8 4 V5 M4 0.5 H4.5 M4 8.5 H4.5" stroke="#6a6a6a" stroke-width="0.9"/></svg>
<div style="left:41px;top:92.5px;width:122px;height:9.5px;background:#2b2b2b;border-radius:2px"></div>
<span class="t" style="left:42.8px;top:94.6px;font-size:6.6px;color:#707070;transform:scaleX(0.871);">Search...</span>
<svg style="left:155.4px;top:95.6px;" width="5" height="3.5" viewBox="0 0 5 3.5"><path d="M0 0 H4.8 L2.4 3Z" fill="#d8d8d8"/></svg>
<div style="left:26px;top:103px;width:131.8px;height:371px;background:#373737;"></div>
<div style="left:157.8px;top:103px;width:5.2px;height:371px;background:#3a3a3a;"></div>
<div style="left:157.8px;top:109.5px;width:5.2px;height:350.5px;background:#5a5a5a;border-radius:2.5px"></div>
<svg style="left:158px;top:103.5px;" width="5" height="4" viewBox="0 0 5 4"><path d="M0 3.5 L2.5 0.5 L5 3.5Z" fill="#d0d0d0"/></svg>
<svg style="left:158px;top:462px;" width="5" height="4" viewBox="0 0 5 4"><path d="M0 0.5 L2.5 3.5 L5 0.5Z" fill="#d0d0d0"/></svg>
<div style="left:26px;top:466px;width:132px;height:8px;background:#333333;"></div>
<svg style="left:28px;top:468px;" width="4" height="5" viewBox="0 0 4 5"><path d="M3.5 0 V5 L0.5 2.5Z" fill="#d0d0d0"/></svg>
<svg style="left:152px;top:468px;" width="4" height="5" viewBox="0 0 4 5"><path d="M0.5 0 V5 L3.5 2.5Z" fill="#d0d0d0"/></svg>
<div style="left:33px;top:468px;width:117px;height:5px;background:#5a5a5a;border-radius:2.5px"></div>
<svg style="left:72px;top:475.5px;" width="46" height="2" viewBox="0 0 46 2"><rect x="0.0" y="0" width="1" height="1" fill="#5e5e5e"/><rect x="2.3" y="0" width="1" height="1" fill="#5e5e5e"/><rect x="4.6" y="0" width="1" height="1" fill="#5e5e5e"/><rect x="6.8999999999999995" y="0" width="1" height="1" fill="#5e5e5e"/><rect x="9.2" y="0" width="1" height="1" fill="#5e5e5e"/><rect x="11.5" y="0" width="1" height="1" fill="#5e5e5e"/><rect x="13.799999999999999" y="0" width="1" height="1" fill="#5e5e5e"/><rect x="16.099999999999998" y="0" width="1" height="1" fill="#5e5e5e"/><rect x="18.4" y="0" width="1" height="1" fill="#5e5e5e"/><rect x="20.7" y="0" width="1" height="1" fill="#5e5e5e"/><rect x="23.0" y="0" width="1" height="1" fill="#5e5e5e"/><rect x="25.299999999999997" y="0" width="1" height="1" fill="#5e5e5e"/><rect x="27.599999999999998" y="0" width="1" height="1" fill="#5e5e5e"/><rect x="29.9" y="0" width="1" height="1" fill="#5e5e5e"/><rect x="32.199999999999996" y="0" width="1" height="1" fill="#5e5e5e"/><rect x="34.5" y="0" width="1" height="1" fill="#5e5e5e"/><rect x="36.8" y="0" width="1" height="1" fill="#5e5e5e"/><rect x="39.099999999999994" y="0" width="1" height="1" fill="#5e5e5e"/><rect x="41.4" y="0" width="1" height="1" fill="#5e5e5e"/><rect x="43.699999999999996" y="0" width="1" height="1" fill="#5e5e5e"/></svg>
<svg style="left:46px;top:105px;" width="8" height="6" viewBox="0 0 8 6"><rect x="0" y="1" width="5" height="4" fill="#d8d8d8"/><path d="M5 3 L7.5 1 V5Z" fill="#d8d8d8"/></svg>
<span class="t" style="left:55.8px;top:105.4px;font-size:6.6px;color:#6e6e6e;">persp</span>
<svg style="left:46px;top:115.7px;" width="8" height="6" viewBox="0 0 8 6"><rect x="0" y="1" width="5" height="4" fill="#d8d8d8"/><path d="M5 3 L7.5 1 V5Z" fill="#d8d8d8"/></svg>
<span class="t" style="left:55.8px;top:116.10000000000001px;font-size:6.6px;color:#6e6e6e;">top</span>
<svg style="left:46px;top:126.4px;" width="8" height="6" viewBox="0 0 8 6"><rect x="0" y="1" width="5" height="4" fill="#d8d8d8"/><path d="M5 3 L7.5 1 V5Z" fill="#d8d8d8"/></svg>
<span class="t" style="left:55.8px;top:126.80000000000001px;font-size:6.6px;color:#6e6e6e;">front</span>
<svg style="left:46px;top:137px;" width="8" height="6" viewBox="0 0 8 6"><rect x="0" y="1" width="5" height="4" fill="#d8d8d8"/><path d="M5 3 L7.5 1 V5Z" fill="#d8d8d8"/></svg>
<span class="t" style="left:55.8px;top:137.4px;font-size:6.6px;color:#6e6e6e;">side</span>
<svg style="left:45px;top:147px;" width="9" height="8" viewBox="0 0 9 8"><path d="M4.5 0.5 L8.5 4 L4.5 7.5 L0.5 4Z" fill="none" stroke="#e0e0e0" stroke-width="1.1"/><circle cx="4.5" cy="4" r="1.3" fill="#e0e0e0"/></svg>
<span class="t" style="left:55.8px;top:147.7px;font-size:6.6px;color:#cccccc;transform:scaleX(0.861);">Male_Base_Mesh</span>
<svg style="left:38.0px;top:159.3px;" width="5" height="5" viewBox="0 0 5 5"><rect x="0.5" y="0.5" width="4" height="4" fill="#373737" stroke="#a0a0a0" stroke-width="0.8"/><path d="M1.3 2.5 H3.7" stroke="#b0b0b0" stroke-width="0.8"/></svg>
<svg style="left:46.0px;top:156.8px;" width="8" height="10" viewBox="0 0 8 10"><path d="M6.6 1.2 L2 5.2" stroke="#a796e4" stroke-width="1.3" stroke-linecap="round"/><path d="M2 5.2 L5.8 9" stroke="#a796e4" stroke-width="2" stroke-linecap="round"/><circle cx="6.6" cy="1.4" r="1.2" fill="#a796e4"/><circle cx="2.2" cy="5.2" r="1.5" fill="#b9acec"/></svg>
<span class="t" style="left:55.5px;top:159.0px;font-size:6.6px;color:#c8c8c8;transform:scaleX(0.860);">Hip_J</span>
<svg style="left:44.3px;top:170.0px;" width="5" height="5" viewBox="0 0 5 5"><rect x="0.5" y="0.5" width="4" height="4" fill="#373737" stroke="#a0a0a0" stroke-width="0.8"/><path d="M1.3 2.5 H3.7" stroke="#b0b0b0" stroke-width="0.8"/></svg>
<svg style="left:52.3px;top:167.5px;" width="8" height="10" viewBox="0 0 8 10"><path d="M6.6 1.2 L2 5.2" stroke="#a796e4" stroke-width="1.3" stroke-linecap="round"/><path d="M2 5.2 L5.8 9" stroke="#a796e4" stroke-width="2" stroke-linecap="round"/><circle cx="6.6" cy="1.4" r="1.2" fill="#a796e4"/><circle cx="2.2" cy="5.2" r="1.5" fill="#b9acec"/></svg>
<span class="t" style="left:61.8px;top:169.7px;font-size:6.6px;color:#c8c8c8;transform:scaleX(0.860);">L_Leg_J</span>
<svg style="left:50.6px;top:180.5px;" width="5" height="5" viewBox="0 0 5 5"><rect x="0.5" y="0.5" width="4" height="4" fill="#373737" stroke="#a0a0a0" stroke-width="0.8"/><path d="M1.3 2.5 H3.7" stroke="#b0b0b0" stroke-width="0.8"/></svg>
<svg style="left:58.6px;top:178px;" width="8" height="10" viewBox="0 0 8 10"><path d="M6.6 1.2 L2 5.2" stroke="#a796e4" stroke-width="1.3" stroke-linecap="round"/><path d="M2 5.2 L5.8 9" stroke="#a796e4" stroke-width="2" stroke-linecap="round"/><circle cx="6.6" cy="1.4" r="1.2" fill="#a796e4"/><circle cx="2.2" cy="5.2" r="1.5" fill="#b9acec"/></svg>
<span class="t" style="left:68.1px;top:180.2px;font-size:6.6px;color:#c8c8c8;transform:scaleX(0.860);">L_Knee_J</span>
<svg style="left:56.9px;top:191.5px;" width="5" height="5" viewBox="0 0 5 5"><rect x="0.5" y="0.5" width="4" height="4" fill="#373737" stroke="#a0a0a0" stroke-width="0.8"/><path d="M1.3 2.5 H3.7" stroke="#b0b0b0" stroke-width="0.8"/></svg>
<svg style="left:64.9px;top:189px;" width="8" height="10" viewBox="0 0 8 10"><path d="M6.6 1.2 L2 5.2" stroke="#a796e4" stroke-width="1.3" stroke-linecap="round"/><path d="M2 5.2 L5.8 9" stroke="#a796e4" stroke-width="2" stroke-linecap="round"/><circle cx="6.6" cy="1.4" r="1.2" fill="#a796e4"/><circle cx="2.2" cy="5.2" r="1.5" fill="#b9acec"/></svg>
<span class="t" style="left:74.4px;top:191.2px;font-size:6.6px;color:#c8c8c8;transform:scaleX(0.860);">L_Ankle_J</span>
<svg style="left:63.2px;top:201.5px;" width="5" height="5" viewBox="0 0 5 5"><rect x="0.5" y="0.5" width="4" height="4" fill="#373737" stroke="#a0a0a0" stroke-width="0.8"/><path d="M1.3 2.5 H3.7" stroke="#b0b0b0" stroke-width="0.8"/></svg>
<svg style="left:71.2px;top:199px;" width="8" height="10" viewBox="0 0 8 10"><path d="M6.6 1.2 L2 5.2" stroke="#a796e4" stroke-width="1.3" stroke-linecap="round"/><path d="M2 5.2 L5.8 9" stroke="#a796e4" stroke-width="2" stroke-linecap="round"/><circle cx="6.6" cy="1.4" r="1.2" fill="#a796e4"/><circle cx="2.2" cy="5.2" r="1.5" fill="#b9acec"/></svg>
<span class="t" style="left:80.7px;top:201.2px;font-size:6.6px;color:#c8c8c8;transform:scaleX(0.860);">L_Foot_J1</span>
<div style="left:72.5px;top:213.9px;width:2.4px;height:2.4px;background:#a8a8a8;border-radius:50%"></div>
<svg style="left:77.2px;top:210px;" width="8" height="10" viewBox="0 0 8 10"><path d="M6.6 1.2 L2 5.2" stroke="#a796e4" stroke-width="1.3" stroke-linecap="round"/><path d="M2 5.2 L5.8 9" stroke="#a796e4" stroke-width="2" stroke-linecap="round"/><circle cx="6.6" cy="1.4" r="1.2" fill="#a796e4"/><circle cx="2.2" cy="5.2" r="1.5" fill="#b9acec"/></svg>
<span class="t" style="left:86.9px;top:212.2px;font-size:6.6px;color:#c8c8c8;transform:scaleX(0.860);">L_Foot_J2</span>
<svg style="left:44.3px;top:223.1px;" width="5" height="5" viewBox="0 0 5 5"><rect x="0.5" y="0.5" width="4" height="4" fill="#373737" stroke="#a0a0a0" stroke-width="0.8"/><path d="M1.3 2.5 H3.7" stroke="#b0b0b0" stroke-width="0.8"/></svg>
<svg style="left:52.3px;top:220.6px;" width="8" height="10" viewBox="0 0 8 10"><path d="M6.6 1.2 L2 5.2" stroke="#a796e4" stroke-width="1.3" stroke-linecap="round"/><path d="M2 5.2 L5.8 9" stroke="#a796e4" stroke-width="2" stroke-linecap="round"/><circle cx="6.6" cy="1.4" r="1.2" fill="#a796e4"/><circle cx="2.2" cy="5.2" r="1.5" fill="#b9acec"/></svg>
<span class="t" style="left:61.8px;top:222.79999999999998px;font-size:6.6px;color:#c8c8c8;transform:scaleX(0.860);">R_Leg_J</span>
<svg style="left:50.6px;top:233.8px;" width="5" height="5" viewBox="0 0 5 5"><rect x="0.5" y="0.5" width="4" height="4" fill="#373737" stroke="#a0a0a0" stroke-width="0.8"/><path d="M1.3 2.5 H3.7" stroke="#b0b0b0" stroke-width="0.8"/></svg>
<svg style="left:58.6px;top:231.3px;" width="8" height="10" viewBox="0 0 8 10"><path d="M6.6 1.2 L2 5.2" stroke="#a796e4" stroke-width="1.3" stroke-linecap="round"/><path d="M2 5.2 L5.8 9" stroke="#a796e4" stroke-width="2" stroke-linecap="round"/><circle cx="6.6" cy="1.4" r="1.2" fill="#a796e4"/><circle cx="2.2" cy="5.2" r="1.5" fill="#b9acec"/></svg>
<span class="t" style="left:68.1px;top:233.5px;font-size:6.6px;color:#c8c8c8;transform:scaleX(0.860);">R_Knee_J</span>
<svg style="left:56.9px;top:244.5px;" width="5" height="5" viewBox="0 0 5 5"><rect x="0.5" y="0.5" width="4" height="4" fill="#373737" stroke="#a0a0a0" stroke-width="0.8"/><path d="M1.3 2.5 H3.7" stroke="#b0b0b0" stroke-width="0.8"/></svg>
<svg style="left:64.9px;top:242px;" width="8" height="10" viewBox="0 0 8 10"><path d="M6.6 1.2 L2 5.2" stroke="#a796e4" stroke-width="1.3" stroke-linecap="round"/><path d="M2 5.2 L5.8 9" stroke="#a796e4" stroke-width="2" stroke-linecap="round"/><circle cx="6.6" cy="1.4" r="1.2" fill="#a796e4"/><circle cx="2.2" cy="5.2" r="1.5" fill="#b9acec"/></svg>
<span class="t" style="left:74.4px;top:244.2px;font-size:6.6px;color:#c8c8c8;transform:scaleX(0.860);">R_Ankle_J</span>
<svg style="left:63.2px;top:255.10000000000002px;" width="5" height="5" viewBox="0 0 5 5"><rect x="0.5" y="0.5" width="4" height="4" fill="#373737" stroke="#a0a0a0" stroke-width="0.8"/><path d="M1.3 2.5 H3.7" stroke="#b0b0b0" stroke-width="0.8"/></svg>
<svg style="left:71.2px;top:252.60000000000002px;" width="8" height="10" viewBox="0 0 8 10"><path d="M6.6 1.2 L2 5.2" stroke="#a796e4" stroke-width="1.3" stroke-linecap="round"/><path d="M2 5.2 L5.8 9" stroke="#a796e4" stroke-width="2" stroke-linecap="round"/><circle cx="6.6" cy="1.4" r="1.2" fill="#a796e4"/><circle cx="2.2" cy="5.2" r="1.5" fill="#b9acec"/></svg>
<span class="t" style="left:80.7px;top:254.8px;font-size:6.6px;color:#c8c8c8;transform:scaleX(0.860);">R_Foot_J1</span>
<div style="left:72.5px;top:267.4px;width:2.4px;height:2.4px;background:#a8a8a8;border-radius:50%"></div>
<svg style="left:77.2px;top:263.5px;" width="8" height="10" viewBox="0 0 8 10"><path d="M6.6 1.2 L2 5.2" stroke="#a796e4" stroke-width="1.3" stroke-linecap="round"/><path d="M2 5.2 L5.8 9" stroke="#a796e4" stroke-width="2" stroke-linecap="round"/><circle cx="6.6" cy="1.4" r="1.2" fill="#a796e4"/><circle cx="2.2" cy="5.2" r="1.5" fill="#b9acec"/></svg>
<span class="t" style="left:86.9px;top:265.7px;font-size:6.6px;color:#c8c8c8;transform:scaleX(0.860);">R_Foot_J2</span>
<svg style="left:38.0px;top:276.5px;" width="5" height="5" viewBox="0 0 5 5"><rect x="0.5" y="0.5" width="4" height="4" fill="#373737" stroke="#a0a0a0" stroke-width="0.8"/><path d="M1.3 2.5 H3.7" stroke="#b0b0b0" stroke-width="0.8"/></svg>
<svg style="left:46.0px;top:274px;" width="8" height="10" viewBox="0 0 8 10"><path d="M6.6 1.2 L2 5.2" stroke="#a796e4" stroke-width="1.3" stroke-linecap="round"/><path d="M2 5.2 L5.8 9" stroke="#a796e4" stroke-width="2" stroke-linecap="round"/><circle cx="6.6" cy="1.4" r="1.2" fill="#a796e4"/><circle cx="2.2" cy="5.2" r="1.5" fill="#b9acec"/></svg>
<span class="t" style="left:55.5px;top:276.2px;font-size:6.6px;color:#c8c8c8;transform:scaleX(1.000);">joint1</span>
<svg style="left:44.3px;top:287.1px;" width="5" height="5" viewBox="0 0 5 5"><rect x="0.5" y="0.5" width="4" height="4" fill="#373737" stroke="#a0a0a0" stroke-width="0.8"/><path d="M1.3 2.5 H3.7" stroke="#b0b0b0" stroke-width="0.8"/></svg>
<svg style="left:52.3px;top:284.6px;" width="8" height="10" viewBox="0 0 8 10"><path d="M6.6 1.2 L2 5.2" stroke="#a796e4" stroke-width="1.3" stroke-linecap="round"/><path d="M2 5.2 L5.8 9" stroke="#a796e4" stroke-width="2" stroke-linecap="round"/><circle cx="6.6" cy="1.4" r="1.2" fill="#a796e4"/><circle cx="2.2" cy="5.2" r="1.5" fill="#b9acec"/></svg>
<span class="t" style="left:61.8px;top:286.8px;font-size:6.6px;color:#c8c8c8;transform:scaleX(1.000);">joint2</span>
<svg style="left:50.6px;top:298.0px;" width="5" height="5" viewBox="0 0 5 5"><rect x="0.5" y="0.5" width="4" height="4" fill="#373737" stroke="#a0a0a0" stroke-width="0.8"/><path d="M1.3 2.5 H3.7" stroke="#b0b0b0" stroke-width="0.8"/></svg>
<svg style="left:58.6px;top:295.5px;" width="8" height="10" viewBox="0 0 8 10"><path d="M6.6 1.2 L2 5.2" stroke="#a796e4" stroke-width="1.3" stroke-linecap="round"/><path d="M2 5.2 L5.8 9" stroke="#a796e4" stroke-width="2" stroke-linecap="round"/><circle cx="6.6" cy="1.4" r="1.2" fill="#a796e4"/><circle cx="2.2" cy="5.2" r="1.5" fill="#b9acec"/></svg>
<span class="t" style="left:68.1px;top:297.7px;font-size:6.6px;color:#c8c8c8;transform:scaleX(1.000);">joint3</span>
<svg style="left:56.9px;top:308.5px;" width="5" height="5" viewBox="0 0 5 5"><rect x="0.5" y="0.5" width="4" height="4" fill="#373737" stroke="#a0a0a0" stroke-width="0.8"/><path d="M1.3 2.5 H3.7" stroke="#b0b0b0" stroke-width="0.8"/><path d="M2.5 1.3 V3.7" stroke="#b0b0b0" stroke-width="0.8"/></svg>
<svg style="left:64.9px;top:306px;" width="8" height="10" viewBox="0 0 8 10"><path d="M6.6 1.2 L2 5.2" stroke="#a796e4" stroke-width="1.3" stroke-linecap="round"/><path d="M2 5.2 L5.8 9" stroke="#a796e4" stroke-width="2" stroke-linecap="round"/><circle cx="6.6" cy="1.4" r="1.2" fill="#a796e4"/><circle cx="2.2" cy="5.2" r="1.5" fill="#b9acec"/></svg>
<span class="t" style="left:74.4px;top:308.2px;font-size:6.6px;color:#c8c8c8;transform:scaleX(1.000);">joint4</span>
<div style="left:40.5px;top:164.5px;width:0.8px;height:61.099999999999994px;background:#8c8c8c;"></div>
<div style="left:40.5px;top:172.5px;width:3.5px;height:0.8px;background:#8c8c8c;"></div>
<div style="left:40.5px;top:225.6px;width:3.5px;height:0.8px;background:#8c8c8c;"></div>
<div style="left:46.8px;top:175px;width:0.8px;height:8px;background:#8c8c8c;"></div>
<div style="left:46.8px;top:183px;width:3.5px;height:0.8px;background:#8c8c8c;"></div>
<div style="left:53.1px;top:185.5px;width:0.8px;height:8.5px;background:#8c8c8c;"></div>
<div style="left:53.1px;top:194px;width:3.5px;height:0.8px;background:#8c8c8c;"></div>
<div style="left:59.4px;top:196.5px;width:0.8px;height:7.5px;background:#8c8c8c;"></div>
<div style="left:59.4px;top:204px;width:3.5px;height:0.8px;background:#8c8c8c;"></div>
<div style="left:65.7px;top:206.5px;width:0.8px;height:8.5px;background:#8c8c8c;"></div>
<div style="left:65.7px;top:215px;width:6.299999999999997px;height:0.8px;background:#8c8c8c;"></div>
<div style="left:46.8px;top:228px;width:0.8px;height:8.300000000000011px;background:#8c8c8c;"></div>
<div style="left:46.8px;top:236.3px;width:3.5px;height:0.8px;background:#8c8c8c;"></div>
<div style="left:53.1px;top:239px;width:0.8px;height:8px;background:#8c8c8c;"></div>
<div style="left:53.1px;top:247px;width:3.5px;height:0.8px;background:#8c8c8c;"></div>
<div style="left:59.4px;top:249.5px;width:0.8px;height:8.100000000000023px;background:#8c8c8c;"></div>
<div style="left:59.4px;top:257.6px;width:3.5px;height:0.8px;background:#8c8c8c;"></div>
<div style="left:65.7px;top:260px;width:0.8px;height:8.5px;background:#8c8c8c;"></div>
<div style="left:65.7px;top:268.5px;width:6.299999999999997px;height:0.8px;background:#8c8c8c;"></div>
<div style="left:40.5px;top:281.5px;width:0.8px;height:8.100000000000023px;background:#8c8c8c;"></div>
<div style="left:40.5px;top:289.6px;width:3.5px;height:0.8px;background:#8c8c8c;"></div>
<div style="left:46.8px;top:292px;width:0.8px;height:8.5px;background:#8c8c8c;"></div>
<div style="left:46.8px;top:300.5px;width:3.5px;height:0.8px;background:#8c8c8c;"></div>
<div style="left:53.1px;top:303px;width:0.8px;height:8px;background:#8c8c8c;"></div>
<div style="left:53.1px;top:311px;width:3.5px;height:0.8px;background:#8c8c8c;"></div>
<svg style="left:45px;top:317.3px;" width="9" height="9" viewBox="0 0 9 9"><circle cx="4.5" cy="4.5" r="3.8" fill="#333" stroke="#d0d0d0" stroke-width="0.9"/><circle cx="5.5" cy="5" r="2" fill="#3ab4c8"/><circle cx="3.5" cy="3.5" r="1.2" fill="#e0e0e0"/></svg>
<span class="t" style="left:55.8px;top:319.0px;font-size:6.6px;color:#c8c8c8;transform:scaleX(0.945);">defaultLightSet</span>
<svg style="left:45px;top:328.0px;" width="9" height="9" viewBox="0 0 9 9"><circle cx="4.5" cy="4.5" r="3.8" fill="#333" stroke="#d0d0d0" stroke-width="0.9"/><circle cx="5.5" cy="5" r="2" fill="#3ab4c8"/><circle cx="3.5" cy="3.5" r="1.2" fill="#e0e0e0"/></svg>
<span class="t" style="left:55.8px;top:329.7px;font-size:6.6px;color:#c8c8c8;transform:scaleX(0.945);">defaultObjectSet</span>
<div style="left:168px;top:69px;width:705px;height:410px;background:#444444;"></div>
<div style="left:168px;top:70px;width:705px;height:409px;background:transparent;border:1px solid #6a6a6a;box-sizing:border-box"></div>
<span class="t" style="left:172.7px;top:73px;font-size:6.6px;color:#cdcdcd;transform:scaleX(0.938);">View</span>
<span class="t" style="left:194px;top:73px;font-size:6.6px;color:#cdcdcd;transform:scaleX(0.950);">Shading</span>
<span class="t" style="left:225px;top:73px;font-size:6.6px;color:#cdcdcd;transform:scaleX(0.995);">Lighting</span>
<span class="t" style="left:256px;top:73px;font-size:6.6px;color:#cdcdcd;transform:scaleX(0.951);">Show</span>
<span class="t" style="left:279.5px;top:73px;font-size:6.6px;color:#cdcdcd;transform:scaleX(0.916);">Renderer</span>
<span class="t" style="left:312px;top:73px;font-size:6.6px;color:#cdcdcd;transform:scaleX(0.892);">Panels</span>
<svg style="left:171px;top:82px;" width="2" height="8" viewBox="0 0 2 8"><rect x="0" y="0" width="1.5" height="8" fill="#8a8a8a"/></svg>
<svg style="left:175px;top:81px;" width="9" height="9" viewBox="0 0 9 9"><rect x="0" y="0" width="9" height="9" fill="#3aa0d0"/><path d="M2.5 7.5 L4.5 1.5 L6.5 7.5 M3.3 5.2 H5.7" stroke="#fff" stroke-width="1.1" fill="none"/></svg>
<svg style="left:187px;top:81px;" width="9" height="9" viewBox="0 0 9 9"><rect x="1" y="1" width="7" height="7" fill="#3ab4c8" stroke="#ccc" stroke-width="0.8"/></svg>
<svg style="left:197px;top:81px;" width="9" height="9" viewBox="0 0 9 9"><rect x="0.5" y="0.5" width="8" height="8" fill="#4a5866" stroke="#5a6a76" stroke-width="0.6"/></svg>
<svg style="left:207px;top:81px;" width="9" height="9" viewBox="0 0 9 9"><circle cx="4.5" cy="4.5" r="4" fill="#535353" stroke="#666" stroke-width="0.6"/></svg>
<svg style="left:217px;top:81px;" width="9" height="9" viewBox="0 0 9 9"><rect x="0.5" y="0.5" width="8" height="8" fill="#4a5660" stroke="#5c6670" stroke-width="0.6"/></svg>
<div style="left:227px;top:82px;width:1px;height:8px;background:#888;"></div>
<svg style="left:231px;top:81px;" width="9" height="9" viewBox="0 0 9 9"><rect x="0.3" y="3" width="5.5" height="3.6" fill="#dcdcdc"/><path d="M5.8 4.8 L8.5 3 V6.6Z" fill="#dcdcdc"/></svg>
<svg style="left:241px;top:81px;" width="10" height="9" viewBox="0 0 10 9"><rect x="0.3" y="0.8" width="5.5" height="3.2" fill="#d0d0d0"/><path d="M5.8 2.4 L8.5 0.8 V4Z" fill="#d0d0d0"/><rect x="0.8" y="6" width="3.6" height="3" fill="#3ab4c8"/><path d="M1.6 6 V5 A1 1 0 0 1 3.6 5 V6" stroke="#3ab4c8" stroke-width="0.7" fill="none"/></svg>
<svg style="left:251px;top:81px;" width="10" height="9" viewBox="0 0 10 9"><rect x="0.3" y="0.8" width="5.5" height="3.2" fill="#d0d0d0"/><path d="M5.8 2.4 L8.5 0.8 V4Z" fill="#d0d0d0"/><ellipse cx="3.2" cy="6.8" rx="2.6" ry="1.8" fill="none" stroke="#3ab4c8" stroke-width="1"/></svg>
<svg style="left:264px;top:81px;" width="5" height="9" viewBox="0 0 5 9"><path d="M0.5 0.5 H4 V8 L2.25 6 L0.5 8Z" fill="#d0d0d0"/></svg>
<svg style="left:272px;top:81px;" width="9" height="9" viewBox="0 0 9 9"><path d="M7 1 Q8 4 4 7.5 L3 6.5 Q5 3 7 1Z" fill="#3ab4c8"/><path d="M0.5 8.5 L2.5 6.8 M3.5 8.5 H7" stroke="#aaa" stroke-width="0.6"/></svg>
<svg style="left:283px;top:81px;" width="8" height="9" viewBox="0 0 8 9"><circle cx="5" cy="4.5" r="2.2" stroke="#3ab4c8" stroke-width="1.1" fill="none"/><path d="M3.3 6.2 L1 8.5" stroke="#3ab4c8" stroke-width="1.1"/><path d="M1.5 2 H3.5 M2.5 1 V3" stroke="#ccc" stroke-width="0.6"/></svg>
<svg style="left:291.4px;top:81px;" width="10" height="9" viewBox="0 0 10 9"><path d="M2.8 0.5 H0.5 V8.5 H2.8 M6.8 0.5 H9.1 V8.5 H6.8" stroke="#22c422" stroke-width="1" fill="none"/><path d="M2.8 7 L7 2" stroke="#3ab4c8" stroke-width="1.3"/><path d="M2.5 7.5 L3.3 6.7" stroke="#ddd" stroke-width="1"/></svg>
<div style="left:303px;top:82px;width:1px;height:8px;background:#888;"></div>
<div style="left:306px;top:81px;width:10px;height:9px;background:#4a7898;"></div>
<svg style="left:307px;top:82px;" width="9" height="9" viewBox="0 0 9 9"><rect x="0.5" y="0.5" width="7" height="7" fill="none" stroke="#ddd" stroke-width="0.8"/><path d="M0.5 3 H7.5 M0.5 5 H7.5 M3 0.5 V7.5 M5 0.5 V7.5" stroke="#ddd" stroke-width="0.6"/></svg>
<svg style="left:318px;top:81px;" width="9" height="9" viewBox="0 0 9 9"><rect x="0.5" y="1.5" width="8" height="6" fill="none" stroke="#ddd" stroke-width="0.8"/><rect x="0.5" y="1.5" width="8" height="1.5" fill="#ddd"/></svg>
<svg style="left:328px;top:81px;" width="9" height="9" viewBox="0 0 9 9"><rect x="0.5" y="1" width="8" height="7" fill="none" stroke="#ccc" stroke-width="0.8"/><circle cx="4.5" cy="4.5" r="1.5" fill="#3ab4c8"/></svg>
<svg style="left:338px;top:81px;" width="9" height="9" viewBox="0 0 9 9"><rect x="0.5" y="0.5" width="7" height="8" fill="#3a3a3a"/><circle cx="4" cy="4.5" r="2.5" fill="#444"/></svg>
<svg style="left:348px;top:81px;" width="9" height="9" viewBox="0 0 9 9"><rect x="0.5" y="0.5" width="8" height="8" fill="none" stroke="#ccc" stroke-width="0.8"/><path d="M4.5 0.5 V8.5 M0.5 4.5 H8.5" stroke="#ccc" stroke-width="0.6"/></svg>
<svg style="left:358px;top:81px;" width="9" height="9" viewBox="0 0 9 9"><rect x="0.5" y="0.5" width="8" height="8" fill="none" stroke="#ccc" stroke-width="0.8"/><rect x="2" y="4" width="3" height="3" fill="#3ab4c8"/><rect x="5" y="2" width="2" height="2" fill="#ccc"/></svg>
<svg style="left:368px;top:81px;" width="9" height="9" viewBox="0 0 9 9"><rect x="0.5" y="0.5" width="8" height="8" fill="none" stroke="#ccc" stroke-width="0.8"/><path d="M2 2 H7 M4.5 2 V7" stroke="#3ab4c8" stroke-width="1.2"/></svg>
<div style="left:381px;top:82px;width:1px;height:8px;background:#888;"></div>
<svg style="left:384.5px;top:81px;" width="9" height="9" viewBox="0 0 9 9"><path d="M4.5 0.5 L8.5 2.5 V6.5 L4.5 8.5 L0.5 6.5 V2.5Z M0.5 2.5 L4.5 4.5 L8.5 2.5 M4.5 4.5 V8.5" fill="none" stroke="#ccc" stroke-width="0.7"/></svg>
<div style="left:393.5px;top:80.5px;width:10.5px;height:10px;background:#4a7898;"></div>
<svg style="left:394.5px;top:81px;" width="9" height="9" viewBox="0 0 9 9"><path d="M4.5 0.5 L8.5 2.5 V6.5 L4.5 8.5 L0.5 6.5 V2.5Z" fill="#5bc0e0"/><path d="M0.5 2.5 L4.5 4.5 L8.5 2.5 M4.5 4.5 V8.5" fill="none" stroke="#ddd" stroke-width="0.7"/></svg>
<svg style="left:409px;top:81px;" width="8" height="9" viewBox="0 0 8 9"><path d="M4 0.5 A4 4 0 0 0 4 8.5Z" fill="#ddd"/><path d="M4 0.5 A4 4 0 0 1 4 8.5" fill="none" stroke="#999" stroke-width="0.8" stroke-dasharray="1 1"/></svg>
<svg style="left:416.5px;top:81px;" width="9" height="9" viewBox="0 0 9 9"><path d="M3 0.5 H6 V8.5 H3Z" fill="#3ab4c8"/><rect x="0.5" y="1" width="8" height="7" fill="none" stroke="#ccc" stroke-width="0.8"/><path d="M0.5 4.5 H8.5" stroke="#ccc" stroke-width="0.6"/></svg>
<svg style="left:426.6px;top:81px;" width="9" height="9" viewBox="0 0 9 9"><circle cx="4.5" cy="4.5" r="4" fill="#bbb"/><path d="M1 3 H8 M1 6 H8 M3 1 V8 M6 1 V8" stroke="#555" stroke-width="0.8"/></svg>
<svg style="left:437px;top:81px;" width="6" height="9" viewBox="0 0 6 9"><circle cx="3" cy="3" r="2.3" fill="#e0e0e0"/><path d="M3 5.3 V8.5 M0 3 H0.5 M5.5 3 H6 M0.6 0.6 L1 1 M5.4 0.6 L5 1" stroke="#ccc" stroke-width="0.8"/></svg>
<svg style="left:445.7px;top:81px;" width="10" height="9" viewBox="0 0 10 9"><ellipse cx="5.5" cy="4.5" rx="3.7" ry="3.2" fill="#3ab4c8"/><path d="M0 6 Q3 8 8 7.5" stroke="#999" fill="none"/></svg>
<div style="left:457.9px;top:82px;width:1px;height:8px;background:#888;"></div>
<svg style="left:462px;top:81px;" width="8" height="9" viewBox="0 0 8 9"><circle cx="4" cy="3.3" r="3" fill="#d8d8d8"/><path d="M0.5 8 H7.5" stroke="#3ab4c8" stroke-width="1.2"/><path d="M4 6.3 V8" stroke="#3ab4c8"/></svg>
<svg style="left:472px;top:81px;" width="8" height="9" viewBox="0 0 8 9"><circle cx="5.5" cy="3.5" r="2.7" fill="#d0d0d0"/><circle cx="2.7" cy="6" r="2.4" fill="#777"/></svg>
<svg style="left:482.5px;top:81px;" width="8" height="9" viewBox="0 0 8 9"><circle cx="4" cy="4.5" r="3.3" fill="none" stroke="#3ab4c8" stroke-width="1.2"/><path d="M4 0 V9" stroke="#ddd" stroke-width="0.7"/></svg>
<svg style="left:491.4px;top:81px;" width="9" height="9" viewBox="0 0 9 9"><rect x="0" y="0" width="9" height="9" fill="#3c3c3c"/><rect x="2" y="2" width="5" height="5" fill="#4a5a60"/></svg>
<div style="left:504px;top:82px;width:1px;height:8px;background:#888;"></div>
<svg style="left:509px;top:81px;" width="8" height="9" viewBox="0 0 8 9"><rect x="0.5" y="0.5" width="5.5" height="5.5" fill="none" stroke="#3ab4c8" stroke-width="0.8" stroke-dasharray="1 1"/><path d="M3.5 3.5 L8 7.5 L6.2 7.8 L7 9 Z" fill="#ddd"/></svg>
<div style="left:519.8px;top:82px;width:1px;height:8px;background:#888;"></div>
<svg style="left:524.4px;top:81px;" width="8" height="9" viewBox="0 0 8 9"><rect x="0.5" y="3" width="5" height="5" fill="#ddd"/><rect x="2.5" y="0.5" width="5.5" height="5.5" fill="none" stroke="#ddd" stroke-width="0.9"/></svg>
<svg style="left:534.5px;top:81px;" width="8" height="9" viewBox="0 0 8 9"><rect x="0.5" y="3" width="5" height="5" fill="#ddd"/><rect x="2.5" y="0.5" width="5.5" height="5.5" fill="#777" stroke="#ddd" stroke-width="0.9"/></svg>
<div style="left:543.4px;top:80.5px;width:10px;height:10px;background:transparent;border:1px solid #5a8fb0;box-sizing:border-box"></div>
<svg style="left:544.5px;top:81.5px;" width="8" height="9" viewBox="0 0 8 9"><rect x="0.5" y="0.5" width="7" height="7" fill="none" stroke="#ddd" stroke-width="0.8"/><path d="M2 2 L6 6 M2 2 H4.5 M2 2 V4.5" stroke="#ddd" stroke-width="0.9"/></svg>
<div style="left:556px;top:82px;width:1px;height:8px;background:#888;"></div>
<svg style="left:561px;top:81px;" width="8" height="9" viewBox="0 0 8 9"><circle cx="4" cy="4.5" r="3.6" fill="#ddd"/><circle cx="4" cy="4.5" r="1.7" fill="#444"/></svg>
<div style="left:571.3px;top:81px;width:19.6px;height:9px;background:#2b2b2b;border-radius:1px"></div>
<span class="t" style="left:575px;top:82.8px;font-size:6.6px;color:#b4b4b4;transform:scaleX(0.934);">0.00</span>
<svg style="left:594.5px;top:81px;" width="7" height="9" viewBox="0 0 7 9"><path d="M1 1 H3.5 A3.5 3.5 0 0 1 3.5 8 H1" fill="none" stroke="#ddd" stroke-width="1.1"/></svg>
<div style="left:603px;top:81px;width:20.4px;height:9px;background:#2b2b2b;border-radius:1px"></div>
<span class="t" style="left:607px;top:82.8px;font-size:6.6px;color:#b4b4b4;transform:scaleX(0.895);">1.00</span>
<div style="left:624.6px;top:80.5px;width:10.2px;height:10px;background:#4a7898;"></div>
<svg style="left:625.7px;top:81px;" width="8" height="9" viewBox="0 0 8 9"><circle cx="4" cy="4.5" r="3.4" fill="#3ab4c8" stroke="#ddd" stroke-width="0.6"/><path d="M2 4.5 H6" stroke="#444" stroke-width="0.8"/></svg>
<div style="left:636.5px;top:80.5px;width:115.5px;height:9.5px;background:#555555;"></div>
<div style="left:742px;top:80.5px;width:10px;height:9.5px;background:#5c5c5c;"></div>
<span class="t" style="left:639px;top:82.5px;font-size:6.6px;color:#c8c8c8;transform:scaleX(0.884);">sRGB gamma (legacy)</span>
<svg style="left:744.5px;top:83.5px;" width="5" height="3.5" viewBox="0 0 5 3.5"><path d="M0 0 H5 L2.5 3.5Z" fill="#d8d8d8"/></svg>
<svg style="left:0;top:0" width="1024" height="539" viewBox="0 0 1024 539"><defs><clipPath id="vpc"><rect x="169" y="91" width="703" height="386"/></clipPath><linearGradient id="bodyg" x1="0" y1="0" x2="1" y2="0"><stop offset="0" stop-color="#8e8e8e"/><stop offset="0.3" stop-color="#a9a9a9"/><stop offset="0.5" stop-color="#adadad"/><stop offset="0.7" stop-color="#a9a9a9"/><stop offset="1" stop-color="#8e8e8e"/></linearGradient><linearGradient id="cubeg" x1="0" y1="0" x2="0" y2="1"><stop offset="0" stop-color="#b9b9b9"/><stop offset="1" stop-color="#9d9d9d"/></linearGradient></defs><rect x="169" y="91" width="703" height="386" fill="#5d5d5d"/><rect x="168.5" y="91" width="0.8" height="386" fill="#727272"/><rect x="168.5" y="476.8" width="704" height="1" fill="#6e6e6e"/><rect x="871.8" y="91" width="0.9" height="386" fill="#6e6e6e"/><g clip-path="url(#vpc)"><line x1="154.0" y1="474.05" x2="823.4" y2="474.05" stroke="#474747" stroke-width="0.8"/><line x1="168.1" y1="462.54" x2="812.0" y2="462.54" stroke="#474747" stroke-width="0.8"/><line x1="181.2" y1="451.88" x2="801.5" y2="451.88" stroke="#474747" stroke-width="0.8"/><line x1="193.3" y1="441.97" x2="791.7" y2="441.97" stroke="#474747" stroke-width="0.8"/><line x1="204.6" y1="432.74" x2="782.5" y2="432.74" stroke="#3e3e3e" stroke-width="1.2"/><line x1="215.2" y1="424.12" x2="774.0" y2="424.12" stroke="#474747" stroke-width="0.8"/><line x1="225.1" y1="416.05" x2="766.0" y2="416.05" stroke="#474747" stroke-width="0.8"/><line x1="234.4" y1="408.48" x2="758.5" y2="408.48" stroke="#474747" stroke-width="0.8"/><line x1="243.1" y1="401.37" x2="751.5" y2="401.37" stroke="#474747" stroke-width="0.8"/><line x1="251.3" y1="394.68" x2="744.8" y2="394.68" stroke="#474747" stroke-width="0.8"/><line x1="259.0" y1="388.36" x2="738.6" y2="388.36" stroke="#474747" stroke-width="0.8"/><line x1="266.4" y1="382.39" x2="732.7" y2="382.39" stroke="#474747" stroke-width="0.8"/><line x1="273.3" y1="376.74" x2="727.1" y2="376.74" stroke="#474747" stroke-width="0.8"/><line x1="279.8" y1="371.39" x2="721.8" y2="371.39" stroke="#474747" stroke-width="0.8"/><line x1="286.1" y1="366.31" x2="716.7" y2="366.31" stroke="#474747" stroke-width="0.8"/><line x1="292.0" y1="361.48" x2="712.0" y2="361.48" stroke="#474747" stroke-width="0.8"/><line x1="297.6" y1="356.89" x2="707.4" y2="356.89" stroke="#474747" stroke-width="0.8"/><line x1="297.6" y1="356.89" x2="146.7" y2="480.00" stroke="#474747" stroke-width="0.8"/><line x1="314.7" y1="356.89" x2="175.1" y2="480.00" stroke="#474747" stroke-width="0.8"/><line x1="331.8" y1="356.89" x2="203.6" y2="480.00" stroke="#474747" stroke-width="0.8"/><line x1="348.8" y1="356.89" x2="232.0" y2="480.00" stroke="#474747" stroke-width="0.8"/><line x1="365.9" y1="356.89" x2="260.5" y2="480.00" stroke="#474747" stroke-width="0.8"/><line x1="383.0" y1="356.89" x2="288.9" y2="480.00" stroke="#474747" stroke-width="0.8"/><line x1="400.1" y1="356.89" x2="317.3" y2="480.00" stroke="#474747" stroke-width="0.8"/><line x1="417.1" y1="356.89" x2="345.8" y2="480.00" stroke="#474747" stroke-width="0.8"/><line x1="434.2" y1="356.89" x2="374.2" y2="480.00" stroke="#474747" stroke-width="0.8"/><line x1="451.3" y1="356.89" x2="402.7" y2="480.00" stroke="#474747" stroke-width="0.8"/><line x1="468.4" y1="356.89" x2="431.1" y2="480.00" stroke="#474747" stroke-width="0.8"/><line x1="485.4" y1="356.89" x2="459.6" y2="480.00" stroke="#474747" stroke-width="0.8"/><line x1="502.5" y1="356.89" x2="488.0" y2="480.00" stroke="#3e3e3e" stroke-width="1.2"/><line x1="519.6" y1="356.89" x2="516.4" y2="480.00" stroke="#474747" stroke-width="0.8"/><line x1="536.7" y1="356.89" x2="544.9" y2="480.00" stroke="#474747" stroke-width="0.8"/><line x1="553.7" y1="356.89" x2="573.3" y2="480.00" stroke="#474747" stroke-width="0.8"/><line x1="570.8" y1="356.89" x2="601.8" y2="480.00" stroke="#474747" stroke-width="0.8"/><line x1="587.9" y1="356.89" x2="630.2" y2="480.00" stroke="#474747" stroke-width="0.8"/><line x1="605.0" y1="356.89" x2="658.7" y2="480.00" stroke="#474747" stroke-width="0.8"/><line x1="622.0" y1="356.89" x2="687.1" y2="480.00" stroke="#474747" stroke-width="0.8"/><line x1="639.1" y1="356.89" x2="715.6" y2="480.00" stroke="#474747" stroke-width="0.8"/><line x1="656.2" y1="356.89" x2="744.0" y2="480.00" stroke="#474747" stroke-width="0.8"/><line x1="673.3" y1="356.89" x2="772.4" y2="480.00" stroke="#474747" stroke-width="0.8"/><line x1="690.3" y1="356.89" x2="800.9" y2="480.00" stroke="#474747" stroke-width="0.8"/><line x1="707.4" y1="356.89" x2="829.3" y2="480.00" stroke="#474747" stroke-width="0.8"/></g><defs><clipPath id="bodyc"><path d="M490.1,128.2 C486.9,128.2 482.7,129.5 480.5,131.1 C478.3,132.7 477.6,135.5 476.8,137.8 C476.1,140.2 476.2,143.2 476.0,145.2 C475.8,147.1 475.5,148.0 475.4,149.5 C475.3,151.0 475.0,152.7 475.2,154.2 C475.4,155.7 476.3,156.6 476.8,158.6 C477.3,160.6 477.7,164.0 478.3,166.0 C478.9,168.0 480.0,168.8 480.5,170.5 C481.0,172.2 481.5,174.4 481.2,176.0 C480.9,177.6 480.1,179.3 478.5,180.3 C476.9,181.3 474.7,181.3 471.6,181.8 C468.5,182.3 463.4,182.6 459.7,183.2 C456.0,183.8 451.9,184.2 449.3,185.5 C446.7,186.8 446.1,188.9 444.1,191.3 C442.1,193.7 439.6,197.8 437.5,200.0 C435.4,202.2 433.9,202.4 431.8,204.2 C429.8,206.0 427.4,208.4 425.2,211.0 C423.0,213.6 420.7,216.9 418.7,219.8 C416.7,222.7 415.4,225.3 413.0,228.5 C410.6,231.7 407.0,235.5 404.3,239.0 C401.6,242.5 398.8,246.1 396.8,249.3 C394.8,252.5 393.7,255.9 392.4,258.1 C391.1,260.3 390.2,260.9 388.9,262.5 C387.6,264.1 385.9,266.2 384.5,268.0 C383.1,269.8 381.4,270.7 380.5,273.0 C379.6,275.3 379.0,279.4 379.0,281.7 C379.0,284.0 379.9,285.7 380.5,287.0 C381.1,288.3 381.8,289.2 382.5,289.6 C383.2,290.0 384.3,289.8 385.0,289.6 C385.7,289.4 386.3,289.8 386.6,288.5 C386.9,287.2 386.6,283.8 386.8,282.0 C387.0,280.2 387.6,278.1 388.0,278.0 C388.4,277.9 389.0,281.0 389.5,281.6 C390.0,282.2 390.4,282.7 390.8,281.8 C391.2,280.9 391.4,278.3 391.8,276.5 C392.2,274.7 391.8,273.1 393.0,271.0 C394.2,268.9 396.5,266.9 399.3,264.0 C402.1,261.1 406.0,257.7 409.7,253.6 C413.4,249.5 418.4,243.1 421.6,239.5 C424.8,235.9 426.5,234.7 429.0,232.1 C431.5,229.5 433.9,226.5 436.7,224.0 C439.5,221.5 443.0,219.4 445.6,217.3 C448.2,215.2 450.5,213.0 452.3,211.7 C454.1,210.4 455.4,208.2 456.7,209.5 C458.0,210.8 459.3,216.9 460.0,219.5 C460.7,222.1 460.5,221.6 461.0,225.0 C461.5,228.4 462.1,234.4 462.8,239.8 C463.5,245.2 464.8,252.7 465.0,257.6 C465.2,262.5 464.9,264.9 464.3,269.4 C463.7,273.8 462.2,279.9 461.3,284.3 C460.4,288.8 459.4,292.7 459.1,296.1 C458.8,299.6 459.3,301.4 459.5,305.0 C459.7,308.6 459.6,311.2 460.2,318.0 C460.8,324.8 462.5,338.3 463.0,346.0 C463.5,353.7 462.7,357.0 463.0,364.0 C463.3,371.0 464.3,382.0 464.8,388.0 C465.3,394.0 465.6,394.7 466.0,400.0 C466.4,405.3 467.5,415.0 467.5,420.0 C467.5,425.0 467.1,427.2 466.0,430.0 C464.9,432.8 462.4,435.0 461.0,437.0 C459.6,439.0 458.1,440.4 457.6,442.0 C457.1,443.6 456.6,445.5 458.0,446.5 C459.4,447.5 463.3,447.8 466.0,448.0 C468.7,448.2 472.3,448.3 474.0,447.5 C475.7,446.7 475.5,447.6 476.2,443.0 C476.9,438.4 477.7,427.2 478.0,420.0 C478.3,412.8 477.4,407.8 478.0,400.0 C478.6,392.2 480.6,381.3 481.5,373.5 C482.4,365.7 482.6,359.2 483.4,353.0 C484.2,346.8 485.1,342.2 486.2,336.4 C487.3,330.6 489.2,324.1 490.0,318.0 C490.8,311.9 490.7,300.0 491.0,300.0 C491.3,300.0 491.1,311.9 492.0,318.0 C492.9,324.1 494.9,330.6 496.4,336.4 C497.9,342.2 499.9,346.8 501.0,353.0 C502.1,359.2 502.4,365.7 502.9,373.5 C503.4,381.3 503.6,392.2 504.0,400.0 C504.4,407.8 504.7,412.8 505.0,420.0 C505.3,427.2 505.1,438.4 505.9,443.0 C506.7,447.6 508.0,446.7 510.0,447.5 C512.0,448.3 515.3,448.2 518.0,448.0 C520.7,447.8 524.6,447.5 526.0,446.5 C527.4,445.5 526.8,443.6 526.3,442.0 C525.8,440.4 524.2,439.0 523.0,437.0 C521.8,435.0 519.9,432.8 519.0,430.0 C518.1,427.2 517.4,425.0 517.5,420.0 C517.6,415.0 519.1,405.3 519.5,400.0 C519.9,394.7 519.3,394.0 519.6,388.0 C519.9,382.0 521.2,371.0 521.4,364.0 C521.5,357.0 520.2,353.7 520.5,346.0 C520.8,338.3 522.7,324.8 523.3,318.0 C523.9,311.2 523.9,308.6 524.0,305.0 C524.1,301.4 524.3,299.6 523.9,296.1 C523.5,292.7 522.6,288.8 521.7,284.3 C520.8,279.9 519.3,273.8 518.7,269.4 C518.1,264.9 517.8,262.5 518.0,257.6 C518.2,252.7 519.5,245.2 520.2,239.8 C520.9,234.4 521.5,228.4 522.0,225.0 C522.5,221.6 522.3,222.1 523.0,219.5 C523.7,216.9 525.0,210.8 526.3,209.5 C527.6,208.2 528.9,210.4 530.7,211.7 C532.6,213.0 534.8,215.2 537.4,217.3 C540.0,219.4 543.5,221.5 546.3,224.0 C549.1,226.5 551.5,229.5 554.0,232.1 C556.5,234.7 558.2,235.9 561.4,239.5 C564.6,243.1 569.6,249.5 573.3,253.6 C577.0,257.7 580.9,261.1 583.7,264.0 C586.5,266.9 588.8,268.9 590.0,271.0 C591.2,273.1 590.8,274.7 591.2,276.5 C591.6,278.3 591.8,280.9 592.2,281.8 C592.6,282.7 593.0,282.2 593.5,281.6 C594.0,281.0 594.5,277.9 595.0,278.0 C595.5,278.1 596.0,280.2 596.2,282.0 C596.4,283.8 596.1,287.2 596.4,288.5 C596.7,289.8 597.3,289.4 598.0,289.6 C598.7,289.8 599.8,290.0 600.5,289.6 C601.2,289.2 601.9,288.3 602.5,287.0 C603.1,285.7 604.0,284.0 604.0,281.7 C604.0,279.4 603.4,275.3 602.5,273.0 C601.6,270.7 599.9,269.8 598.5,268.0 C597.1,266.2 595.4,264.1 594.1,262.5 C592.8,260.9 591.9,260.3 590.6,258.1 C589.3,255.9 588.2,252.5 586.2,249.3 C584.2,246.1 581.4,242.5 578.7,239.0 C576.0,235.5 572.4,231.7 570.0,228.5 C567.6,225.3 566.3,222.7 564.3,219.8 C562.3,216.9 560.0,213.6 557.8,211.0 C555.6,208.4 553.2,206.0 551.2,204.2 C549.2,202.4 547.5,202.2 545.5,200.0 C543.5,197.8 540.9,193.7 538.9,191.3 C536.9,188.9 536.3,186.8 533.7,185.5 C531.1,184.2 527.0,183.8 523.3,183.2 C519.6,182.6 514.8,182.2 511.4,181.8 C508.0,181.4 504.9,181.4 503.0,180.5 C501.1,179.6 500.3,178.2 499.8,176.5 C499.3,174.8 499.6,172.2 500.0,170.5 C500.4,168.8 501.4,167.8 502.0,166.0 C502.6,164.2 502.9,161.7 503.5,160.0 C504.1,158.3 505.4,157.1 505.8,155.6 C506.2,154.1 506.1,152.7 505.8,151.0 C505.5,149.3 504.6,147.4 504.2,145.2 C503.8,143.0 504.2,140.2 503.5,137.8 C502.8,135.5 502.0,132.7 499.8,131.1 C497.6,129.5 493.3,128.2 490.1,128.2Z"/></clipPath><filter id="bl" x="-5%" y="-5%" width="110%" height="110%"><feGaussianBlur stdDeviation="1.6"/></filter></defs><path d="M490.1,128.2 C486.9,128.2 482.7,129.5 480.5,131.1 C478.3,132.7 477.6,135.5 476.8,137.8 C476.1,140.2 476.2,143.2 476.0,145.2 C475.8,147.1 475.5,148.0 475.4,149.5 C475.3,151.0 475.0,152.7 475.2,154.2 C475.4,155.7 476.3,156.6 476.8,158.6 C477.3,160.6 477.7,164.0 478.3,166.0 C478.9,168.0 480.0,168.8 480.5,170.5 C481.0,172.2 481.5,174.4 481.2,176.0 C480.9,177.6 480.1,179.3 478.5,180.3 C476.9,181.3 474.7,181.3 471.6,181.8 C468.5,182.3 463.4,182.6 459.7,183.2 C456.0,183.8 451.9,184.2 449.3,185.5 C446.7,186.8 446.1,188.9 444.1,191.3 C442.1,193.7 439.6,197.8 437.5,200.0 C435.4,202.2 433.9,202.4 431.8,204.2 C429.8,206.0 427.4,208.4 425.2,211.0 C423.0,213.6 420.7,216.9 418.7,219.8 C416.7,222.7 415.4,225.3 413.0,228.5 C410.6,231.7 407.0,235.5 404.3,239.0 C401.6,242.5 398.8,246.1 396.8,249.3 C394.8,252.5 393.7,255.9 392.4,258.1 C391.1,260.3 390.2,260.9 388.9,262.5 C387.6,264.1 385.9,266.2 384.5,268.0 C383.1,269.8 381.4,270.7 380.5,273.0 C379.6,275.3 379.0,279.4 379.0,281.7 C379.0,284.0 379.9,285.7 380.5,287.0 C381.1,288.3 381.8,289.2 382.5,289.6 C383.2,290.0 384.3,289.8 385.0,289.6 C385.7,289.4 386.3,289.8 386.6,288.5 C386.9,287.2 386.6,283.8 386.8,282.0 C387.0,280.2 387.6,278.1 388.0,278.0 C388.4,277.9 389.0,281.0 389.5,281.6 C390.0,282.2 390.4,282.7 390.8,281.8 C391.2,280.9 391.4,278.3 391.8,276.5 C392.2,274.7 391.8,273.1 393.0,271.0 C394.2,268.9 396.5,266.9 399.3,264.0 C402.1,261.1 406.0,257.7 409.7,253.6 C413.4,249.5 418.4,243.1 421.6,239.5 C424.8,235.9 426.5,234.7 429.0,232.1 C431.5,229.5 433.9,226.5 436.7,224.0 C439.5,221.5 443.0,219.4 445.6,217.3 C448.2,215.2 450.5,213.0 452.3,211.7 C454.1,210.4 455.4,208.2 456.7,209.5 C458.0,210.8 459.3,216.9 460.0,219.5 C460.7,222.1 460.5,221.6 461.0,225.0 C461.5,228.4 462.1,234.4 462.8,239.8 C463.5,245.2 464.8,252.7 465.0,257.6 C465.2,262.5 464.9,264.9 464.3,269.4 C463.7,273.8 462.2,279.9 461.3,284.3 C460.4,288.8 459.4,292.7 459.1,296.1 C458.8,299.6 459.3,301.4 459.5,305.0 C459.7,308.6 459.6,311.2 460.2,318.0 C460.8,324.8 462.5,338.3 463.0,346.0 C463.5,353.7 462.7,357.0 463.0,364.0 C463.3,371.0 464.3,382.0 464.8,388.0 C465.3,394.0 465.6,394.7 466.0,400.0 C466.4,405.3 467.5,415.0 467.5,420.0 C467.5,425.0 467.1,427.2 466.0,430.0 C464.9,432.8 462.4,435.0 461.0,437.0 C459.6,439.0 458.1,440.4 457.6,442.0 C457.1,443.6 456.6,445.5 458.0,446.5 C459.4,447.5 463.3,447.8 466.0,448.0 C468.7,448.2 472.3,448.3 474.0,447.5 C475.7,446.7 475.5,447.6 476.2,443.0 C476.9,438.4 477.7,427.2 478.0,420.0 C478.3,412.8 477.4,407.8 478.0,400.0 C478.6,392.2 480.6,381.3 481.5,373.5 C482.4,365.7 482.6,359.2 483.4,353.0 C484.2,346.8 485.1,342.2 486.2,336.4 C487.3,330.6 489.2,324.1 490.0,318.0 C490.8,311.9 490.7,300.0 491.0,300.0 C491.3,300.0 491.1,311.9 492.0,318.0 C492.9,324.1 494.9,330.6 496.4,336.4 C497.9,342.2 499.9,346.8 501.0,353.0 C502.1,359.2 502.4,365.7 502.9,373.5 C503.4,381.3 503.6,392.2 504.0,400.0 C504.4,407.8 504.7,412.8 505.0,420.0 C505.3,427.2 505.1,438.4 505.9,443.0 C506.7,447.6 508.0,446.7 510.0,447.5 C512.0,448.3 515.3,448.2 518.0,448.0 C520.7,447.8 524.6,447.5 526.0,446.5 C527.4,445.5 526.8,443.6 526.3,442.0 C525.8,440.4 524.2,439.0 523.0,437.0 C521.8,435.0 519.9,432.8 519.0,430.0 C518.1,427.2 517.4,425.0 517.5,420.0 C517.6,415.0 519.1,405.3 519.5,400.0 C519.9,394.7 519.3,394.0 519.6,388.0 C519.9,382.0 521.2,371.0 521.4,364.0 C521.5,357.0 520.2,353.7 520.5,346.0 C520.8,338.3 522.7,324.8 523.3,318.0 C523.9,311.2 523.9,308.6 524.0,305.0 C524.1,301.4 524.3,299.6 523.9,296.1 C523.5,292.7 522.6,288.8 521.7,284.3 C520.8,279.9 519.3,273.8 518.7,269.4 C518.1,264.9 517.8,262.5 518.0,257.6 C518.2,252.7 519.5,245.2 520.2,239.8 C520.9,234.4 521.5,228.4 522.0,225.0 C522.5,221.6 522.3,222.1 523.0,219.5 C523.7,216.9 525.0,210.8 526.3,209.5 C527.6,208.2 528.9,210.4 530.7,211.7 C532.6,213.0 534.8,215.2 537.4,217.3 C540.0,219.4 543.5,221.5 546.3,224.0 C549.1,226.5 551.5,229.5 554.0,232.1 C556.5,234.7 558.2,235.9 561.4,239.5 C564.6,243.1 569.6,249.5 573.3,253.6 C577.0,257.7 580.9,261.1 583.7,264.0 C586.5,266.9 588.8,268.9 590.0,271.0 C591.2,273.1 590.8,274.7 591.2,276.5 C591.6,278.3 591.8,280.9 592.2,281.8 C592.6,282.7 593.0,282.2 593.5,281.6 C594.0,281.0 594.5,277.9 595.0,278.0 C595.5,278.1 596.0,280.2 596.2,282.0 C596.4,283.8 596.1,287.2 596.4,288.5 C596.7,289.8 597.3,289.4 598.0,289.6 C598.7,289.8 599.8,290.0 600.5,289.6 C601.2,289.2 601.9,288.3 602.5,287.0 C603.1,285.7 604.0,284.0 604.0,281.7 C604.0,279.4 603.4,275.3 602.5,273.0 C601.6,270.7 599.9,269.8 598.5,268.0 C597.1,266.2 595.4,264.1 594.1,262.5 C592.8,260.9 591.9,260.3 590.6,258.1 C589.3,255.9 588.2,252.5 586.2,249.3 C584.2,246.1 581.4,242.5 578.7,239.0 C576.0,235.5 572.4,231.7 570.0,228.5 C567.6,225.3 566.3,222.7 564.3,219.8 C562.3,216.9 560.0,213.6 557.8,211.0 C555.6,208.4 553.2,206.0 551.2,204.2 C549.2,202.4 547.5,202.2 545.5,200.0 C543.5,197.8 540.9,193.7 538.9,191.3 C536.9,188.9 536.3,186.8 533.7,185.5 C531.1,184.2 527.0,183.8 523.3,183.2 C519.6,182.6 514.8,182.2 511.4,181.8 C508.0,181.4 504.9,181.4 503.0,180.5 C501.1,179.6 500.3,178.2 499.8,176.5 C499.3,174.8 499.6,172.2 500.0,170.5 C500.4,168.8 501.4,167.8 502.0,166.0 C502.6,164.2 502.9,161.7 503.5,160.0 C504.1,158.3 505.4,157.1 505.8,155.6 C506.2,154.1 506.1,152.7 505.8,151.0 C505.5,149.3 504.6,147.4 504.2,145.2 C503.8,143.0 504.2,140.2 503.5,137.8 C502.8,135.5 502.0,132.7 499.8,131.1 C497.6,129.5 493.3,128.2 490.1,128.2Z" fill="#a9a9a9"/><g clip-path="url(#bodyc)"><path d="M490.1,128.2 C486.9,128.2 482.7,129.5 480.5,131.1 C478.3,132.7 477.6,135.5 476.8,137.8 C476.1,140.2 476.2,143.2 476.0,145.2 C475.8,147.1 475.5,148.0 475.4,149.5 C475.3,151.0 475.0,152.7 475.2,154.2 C475.4,155.7 476.3,156.6 476.8,158.6 C477.3,160.6 477.7,164.0 478.3,166.0 C478.9,168.0 480.0,168.8 480.5,170.5 C481.0,172.2 481.5,174.4 481.2,176.0 C480.9,177.6 480.1,179.3 478.5,180.3 C476.9,181.3 474.7,181.3 471.6,181.8 C468.5,182.3 463.4,182.6 459.7,183.2 C456.0,183.8 451.9,184.2 449.3,185.5 C446.7,186.8 446.1,188.9 444.1,191.3 C442.1,193.7 439.6,197.8 437.5,200.0 C435.4,202.2 433.9,202.4 431.8,204.2 C429.8,206.0 427.4,208.4 425.2,211.0 C423.0,213.6 420.7,216.9 418.7,219.8 C416.7,222.7 415.4,225.3 413.0,228.5 C410.6,231.7 407.0,235.5 404.3,239.0 C401.6,242.5 398.8,246.1 396.8,249.3 C394.8,252.5 393.7,255.9 392.4,258.1 C391.1,260.3 390.2,260.9 388.9,262.5 C387.6,264.1 385.9,266.2 384.5,268.0 C383.1,269.8 381.4,270.7 380.5,273.0 C379.6,275.3 379.0,279.4 379.0,281.7 C379.0,284.0 379.9,285.7 380.5,287.0 C381.1,288.3 381.8,289.2 382.5,289.6 C383.2,290.0 384.3,289.8 385.0,289.6 C385.7,289.4 386.3,289.8 386.6,288.5 C386.9,287.2 386.6,283.8 386.8,282.0 C387.0,280.2 387.6,278.1 388.0,278.0 C388.4,277.9 389.0,281.0 389.5,281.6 C390.0,282.2 390.4,282.7 390.8,281.8 C391.2,280.9 391.4,278.3 391.8,276.5 C392.2,274.7 391.8,273.1 393.0,271.0 C394.2,268.9 396.5,266.9 399.3,264.0 C402.1,261.1 406.0,257.7 409.7,253.6 C413.4,249.5 418.4,243.1 421.6,239.5 C424.8,235.9 426.5,234.7 429.0,232.1 C431.5,229.5 433.9,226.5 436.7,224.0 C439.5,221.5 443.0,219.4 445.6,217.3 C448.2,215.2 450.5,213.0 452.3,211.7 C454.1,210.4 455.4,208.2 456.7,209.5 C458.0,210.8 459.3,216.9 460.0,219.5 C460.7,222.1 460.5,221.6 461.0,225.0 C461.5,228.4 462.1,234.4 462.8,239.8 C463.5,245.2 464.8,252.7 465.0,257.6 C465.2,262.5 464.9,264.9 464.3,269.4 C463.7,273.8 462.2,279.9 461.3,284.3 C460.4,288.8 459.4,292.7 459.1,296.1 C458.8,299.6 459.3,301.4 459.5,305.0 C459.7,308.6 459.6,311.2 460.2,318.0 C460.8,324.8 462.5,338.3 463.0,346.0 C463.5,353.7 462.7,357.0 463.0,364.0 C463.3,371.0 464.3,382.0 464.8,388.0 C465.3,394.0 465.6,394.7 466.0,400.0 C466.4,405.3 467.5,415.0 467.5,420.0 C467.5,425.0 467.1,427.2 466.0,430.0 C464.9,432.8 462.4,435.0 461.0,437.0 C459.6,439.0 458.1,440.4 457.6,442.0 C457.1,443.6 456.6,445.5 458.0,446.5 C459.4,447.5 463.3,447.8 466.0,448.0 C468.7,448.2 472.3,448.3 474.0,447.5 C475.7,446.7 475.5,447.6 476.2,443.0 C476.9,438.4 477.7,427.2 478.0,420.0 C478.3,412.8 477.4,407.8 478.0,400.0 C478.6,392.2 480.6,381.3 481.5,373.5 C482.4,365.7 482.6,359.2 483.4,353.0 C484.2,346.8 485.1,342.2 486.2,336.4 C487.3,330.6 489.2,324.1 490.0,318.0 C490.8,311.9 490.7,300.0 491.0,300.0 C491.3,300.0 491.1,311.9 492.0,318.0 C492.9,324.1 494.9,330.6 496.4,336.4 C497.9,342.2 499.9,346.8 501.0,353.0 C502.1,359.2 502.4,365.7 502.9,373.5 C503.4,381.3 503.6,392.2 504.0,400.0 C504.4,407.8 504.7,412.8 505.0,420.0 C505.3,427.2 505.1,438.4 505.9,443.0 C506.7,447.6 508.0,446.7 510.0,447.5 C512.0,448.3 515.3,448.2 518.0,448.0 C520.7,447.8 524.6,447.5 526.0,446.5 C527.4,445.5 526.8,443.6 526.3,442.0 C525.8,440.4 524.2,439.0 523.0,437.0 C521.8,435.0 519.9,432.8 519.0,430.0 C518.1,427.2 517.4,425.0 517.5,420.0 C517.6,415.0 519.1,405.3 519.5,400.0 C519.9,394.7 519.3,394.0 519.6,388.0 C519.9,382.0 521.2,371.0 521.4,364.0 C521.5,357.0 520.2,353.7 520.5,346.0 C520.8,338.3 522.7,324.8 523.3,318.0 C523.9,311.2 523.9,308.6 524.0,305.0 C524.1,301.4 524.3,299.6 523.9,296.1 C523.5,292.7 522.6,288.8 521.7,284.3 C520.8,279.9 519.3,273.8 518.7,269.4 C518.1,264.9 517.8,262.5 518.0,257.6 C518.2,252.7 519.5,245.2 520.2,239.8 C520.9,234.4 521.5,228.4 522.0,225.0 C522.5,221.6 522.3,222.1 523.0,219.5 C523.7,216.9 525.0,210.8 526.3,209.5 C527.6,208.2 528.9,210.4 530.7,211.7 C532.6,213.0 534.8,215.2 537.4,217.3 C540.0,219.4 543.5,221.5 546.3,224.0 C549.1,226.5 551.5,229.5 554.0,232.1 C556.5,234.7 558.2,235.9 561.4,239.5 C564.6,243.1 569.6,249.5 573.3,253.6 C577.0,257.7 580.9,261.1 583.7,264.0 C586.5,266.9 588.8,268.9 590.0,271.0 C591.2,273.1 590.8,274.7 591.2,276.5 C591.6,278.3 591.8,280.9 592.2,281.8 C592.6,282.7 593.0,282.2 593.5,281.6 C594.0,281.0 594.5,277.9 595.0,278.0 C595.5,278.1 596.0,280.2 596.2,282.0 C596.4,283.8 596.1,287.2 596.4,288.5 C596.7,289.8 597.3,289.4 598.0,289.6 C598.7,289.8 599.8,290.0 600.5,289.6 C601.2,289.2 601.9,288.3 602.5,287.0 C603.1,285.7 604.0,284.0 604.0,281.7 C604.0,279.4 603.4,275.3 602.5,273.0 C601.6,270.7 599.9,269.8 598.5,268.0 C597.1,266.2 595.4,264.1 594.1,262.5 C592.8,260.9 591.9,260.3 590.6,258.1 C589.3,255.9 588.2,252.5 586.2,249.3 C584.2,246.1 581.4,242.5 578.7,239.0 C576.0,235.5 572.4,231.7 570.0,228.5 C567.6,225.3 566.3,222.7 564.3,219.8 C562.3,216.9 560.0,213.6 557.8,211.0 C555.6,208.4 553.2,206.0 551.2,204.2 C549.2,202.4 547.5,202.2 545.5,200.0 C543.5,197.8 540.9,193.7 538.9,191.3 C536.9,188.9 536.3,186.8 533.7,185.5 C531.1,184.2 527.0,183.8 523.3,183.2 C519.6,182.6 514.8,182.2 511.4,181.8 C508.0,181.4 504.9,181.4 503.0,180.5 C501.1,179.6 500.3,178.2 499.8,176.5 C499.3,174.8 499.6,172.2 500.0,170.5 C500.4,168.8 501.4,167.8 502.0,166.0 C502.6,164.2 502.9,161.7 503.5,160.0 C504.1,158.3 505.4,157.1 505.8,155.6 C506.2,154.1 506.1,152.7 505.8,151.0 C505.5,149.3 504.6,147.4 504.2,145.2 C503.8,143.0 504.2,140.2 503.5,137.8 C502.8,135.5 502.0,132.7 499.8,131.1 C497.6,129.5 493.3,128.2 490.1,128.2Z" fill="none" stroke="#6c6c6c" stroke-width="4.5" opacity="0.6" filter="url(#bl)"/></g><path d="M477 163 Q482 172 490.3 174.6 Q498.5 172 504 163" stroke="#2a2a2a" stroke-width="0.9" fill="none" opacity="0.85"/><g clip-path="url(#bodyc)"><path d="M456.7,209.5 C456.0,209.9 454.1,210.4 452.3,211.7 C450.5,213.0 448.2,215.2 445.6,217.3 C443.0,219.4 439.5,221.5 436.7,224.0 C433.9,226.5 431.5,229.5 429.0,232.1 C426.5,234.7 424.8,235.9 421.6,239.5 C418.4,243.1 413.4,249.5 409.7,253.6 C406.0,257.7 402.2,261.1 399.3,264.0 C396.4,266.9 393.6,269.8 392.5,271.0" stroke="#5a5a5a" stroke-width="5" fill="none" opacity="0.5" filter="url(#bl)"/><path d="M526.3,209.5 C527.0,209.9 528.9,210.4 530.7,211.7 C532.6,213.0 534.8,215.2 537.4,217.3 C540.0,219.4 543.5,221.5 546.3,224.0 C549.1,226.5 551.5,229.5 554.0,232.1 C556.5,234.7 558.2,235.9 561.4,239.5 C564.6,243.1 569.6,249.5 573.3,253.6 C577.0,257.7 580.8,261.1 583.7,264.0 C586.6,266.9 589.4,269.8 590.5,271.0" stroke="#5a5a5a" stroke-width="5" fill="none" opacity="0.5" filter="url(#bl)"/></g><path d="M456.7,209.5 C456.0,209.9 454.1,210.4 452.3,211.7 C450.5,213.0 448.2,215.2 445.6,217.3 C443.0,219.4 439.5,221.5 436.7,224.0 C433.9,226.5 431.5,229.5 429.0,232.1 C426.5,234.7 424.8,235.9 421.6,239.5 C418.4,243.1 413.4,249.5 409.7,253.6 C406.0,257.7 402.2,261.1 399.3,264.0 C396.4,266.9 393.6,269.8 392.5,271.0" stroke="#1a1a1a" stroke-width="1.1" fill="none" opacity="0.9"/><path d="M526.3,209.5 C527.0,209.9 528.9,210.4 530.7,211.7 C532.6,213.0 534.8,215.2 537.4,217.3 C540.0,219.4 543.5,221.5 546.3,224.0 C549.1,226.5 551.5,229.5 554.0,232.1 C556.5,234.7 558.2,235.9 561.4,239.5 C564.6,243.1 569.6,249.5 573.3,253.6 C577.0,257.7 580.8,261.1 583.7,264.0 C586.6,266.9 589.4,269.8 590.5,271.0" stroke="#1a1a1a" stroke-width="1.1" fill="none" opacity="0.9"/><path d="M457 210 L460 219.5 L462.8 239.8 L465 257.6" stroke="#333" stroke-width="0.6" fill="none" stroke-dasharray="1.5 1" opacity="0.8"/><path d="M526 210 L523 219.5 L520.2 239.8 L518 257.6" stroke="#333" stroke-width="0.6" fill="none" stroke-dasharray="1.5 1" opacity="0.8"/><g filter="url(#bl2)"><ellipse cx="484" cy="150" rx="3.2" ry="1.6" fill="#c4c4c4"/><ellipse cx="497" cy="150" rx="3.2" ry="1.6" fill="#c4c4c4"/><path d="M478.5 146.5 Q484 143.5 489 146" stroke="#959595" stroke-width="1.2" fill="none"/><path d="M492 146 Q497 143.5 502.5 146.5" stroke="#959595" stroke-width="1.2" fill="none"/><ellipse cx="490.3" cy="157.5" rx="2.5" ry="1.6" fill="#7a7a7a"/><ellipse cx="490.3" cy="163.5" rx="3.5" ry="1.3" fill="#c0c0c0"/></g><defs><filter id="bl2" x="-50%" y="-50%" width="200%" height="200%"><feGaussianBlur stdDeviation="0.6"/></filter><filter id="bl3" x="-20%" y="-50%" width="140%" height="200%"><feGaussianBlur stdDeviation="1.5"/></filter></defs><path d="M468 228 Q480 233 490.5 229 Q501 233 514 228" stroke="#8e8e8e" stroke-width="2.5" fill="none" opacity="0.7" filter="url(#bl3)"/><path d="M477 288 Q484 298.5 491 299 Q498 298.5 505 288" stroke="#6a6a6a" stroke-width="1.8" fill="none" opacity="0.55" filter="url(#bl2)"/><circle cx="473.2" cy="444.3" r="2.6" fill="#c4c4c4"/><circle cx="508.3" cy="444.3" r="2.6" fill="#c4c4c4"/><circle cx="468.6" cy="444.9" r="1.9" fill="#c4c4c4"/><circle cx="512.9" cy="444.9" r="1.9" fill="#c4c4c4"/><circle cx="464.6" cy="444.6" r="1.7" fill="#c4c4c4"/><circle cx="516.9" cy="444.6" r="1.7" fill="#c4c4c4"/><circle cx="461" cy="444" r="1.5" fill="#c4c4c4"/><circle cx="520.5" cy="444" r="1.5" fill="#c4c4c4"/><circle cx="458" cy="443.2" r="1.4" fill="#c4c4c4"/><circle cx="523.5" cy="443.2" r="1.4" fill="#c4c4c4"/><g stroke="#3d1b64" fill="none" stroke-linecap="round"><path d="M490.3 131 L491.3 258.5" stroke-width="1.3"/><path d="M491 275.5 L467 298.9 M491 275.5 L516.4 298.9" stroke-width="1.05"/><path d="M467 298.9 L470.8 354 L471 416.8 L470.8 435.7 L467 445.5" stroke-width="1.1"/><path d="M516.4 298.9 L512.5 354 L513.5 417 L513.5 435.6 L514.7 446" stroke-width="1.1"/></g><g fill="#3d1b64"><ellipse cx="490.5" cy="131" rx="1.2" ry="1.5"/><ellipse cx="491" cy="176" rx="1.1" ry="2"/><ellipse cx="491" cy="185" rx="1.1" ry="2"/><ellipse cx="491" cy="199" rx="1.1" ry="2"/><ellipse cx="491.3" cy="216" rx="1.3" ry="3"/><ellipse cx="491.5" cy="246" rx="1.4" ry="6"/><ellipse cx="491" cy="275.5" rx="1.4" ry="1.6"/><ellipse cx="467.3" cy="302" rx="1.2" ry="3.5"/><ellipse cx="516.2" cy="302" rx="1.2" ry="3.5"/><ellipse cx="470.8" cy="357" rx="1.5" ry="4"/><ellipse cx="512.5" cy="357" rx="1.5" ry="4"/><ellipse cx="471" cy="419" rx="1.4" ry="3"/><ellipse cx="513.5" cy="419" rx="1.4" ry="3"/><ellipse cx="470.8" cy="436" rx="1.3" ry="1.8"/><ellipse cx="513.5" cy="436" rx="1.3" ry="1.8"/><ellipse cx="467" cy="445.5" rx="1.2" ry="1.2"/><ellipse cx="514.7" cy="446" rx="1.2" ry="1.2"/></g><rect x="828.6" y="110.8" width="26.2" height="25.2" fill="url(#cubeg)"/></svg>
<span class="t" style="left:832px;top:122px;font-size:5.2px;color:#505050;font-weight:bold;transform:scaleX(1.117);">FRONT</span>
<svg style="left:176px;top:449px;" width="16" height="16" viewBox="0 0 16 16"><path d="M6 14 V2.5" stroke="#21c321" stroke-width="1.1"/><path d="M4.5 3 L6 0.5 L7.5 3Z" fill="#21c321"/><path d="M6 14 H13.5" stroke="#d22" stroke-width="1.1"/><path d="M12.5 12 L15 14 L12.5 15.5Z" fill="#d22"/><circle cx="6" cy="14" r="1.3" fill="#2a3fe0"/></svg>
<span class="t" style="left:509.5px;top:467.8px;font-size:5.6px;color:#e6e6e6;transform:scaleX(1.035);">persp</span>
<div style="left:873px;top:67px;width:3px;height:412px;background:#343434;"></div>
<div style="left:876px;top:67px;width:139px;height:412px;background:#444444;"></div>
<div style="left:1015px;top:67px;width:9px;height:412px;background:#3a3a3a;"></div>
<div style="left:1015px;top:71.6px;width:9px;height:72.4px;background:#484848;border-radius:0 2px 2px 0"></div>
<span class="t" style="left:1015.6px;top:74.3px;font-size:6.8px;color:#d4d4d4;font-weight:bold;writing-mode:vertical-rl;transform:scaleY(0.77);">Channel Box / Layer Editor</span>
<div style="left:1015px;top:147.6px;width:9px;height:58px;background:#3f3f3f;"></div>
<span class="t" style="left:1016.5px;top:159px;font-size:6.3px;color:#7a7a7a;writing-mode:vertical-rl;transform:scaleY(1.07);">Attribute Editor</span>
<div style="left:1015px;top:208px;width:9px;height:58px;background:#3f3f3f;"></div>
<span class="t" style="left:1016.5px;top:214px;font-size:6.3px;color:#7a7a7a;writing-mode:vertical-rl;transform:scaleY(1.09);">Modeling Toolkit</span>
<svg style="left:982px;top:70px;" width="9" height="8" viewBox="0 0 9 8"><path d="M4.5 0 L6 3 H3Z" fill="#2fc42f"/><path d="M4.5 3 V5.5 M4.5 5.5 L1.5 7 M4.5 5.5 L7.5 7" stroke="#ccc" stroke-width="0.8"/><path d="M0 8 L1.5 5 L3 8Z" fill="#3a70e0"/><path d="M6 8 L7.5 5 L9 8Z" fill="#e03a3a"/></svg>
<svg style="left:994px;top:70px;" width="9" height="8" viewBox="0 0 9 8"><path d="M1 7 A3.8 3.8 0 1 1 8 6" stroke="#3ab4c8" stroke-width="2" fill="none"/><circle cx="5" cy="5" r="1.5" fill="#ccc"/></svg>
<svg style="left:1005px;top:69px;" width="9" height="9" viewBox="0 0 9 9"><path d="M1 1 V8 H8" stroke="#888" stroke-width="0.8" fill="none"/><path d="M2 7 L8 1" stroke="#3ab4c8" stroke-width="1.2"/><circle cx="7.5" cy="1.5" r="1.3" fill="#3ab4c8"/></svg>
<span class="t" style="left:882px;top:83px;font-size:6.6px;color:#cdcdcd;transform:scaleX(0.915);">Channels</span>
<span class="t" style="left:916px;top:83px;font-size:6.6px;color:#cdcdcd;transform:scaleX(0.879);">Edit</span>
<span class="t" style="left:934.5px;top:83px;font-size:6.6px;color:#cdcdcd;transform:scaleX(0.917);">Object</span>
<span class="t" style="left:960.5px;top:83px;font-size:6.6px;color:#cdcdcd;transform:scaleX(0.939);">Show</span>
<span class="t" style="left:898px;top:215px;font-size:6.3px;color:#d0d0d0;font-weight:bold;transform:scaleX(0.904);">Select objects in the scene to view,</span>
<span class="t" style="left:897px;top:222px;font-size:6.3px;color:#d0d0d0;font-weight:bold;transform:scaleX(0.921);">edit and set keyframes on channels</span>
<span class="t" style="left:930.5px;top:228.5px;font-size:6.3px;color:#d0d0d0;font-weight:bold;transform:scaleX(0.942);">(attributes)</span>
<svg style="left:923px;top:357.5px;" width="46" height="2" viewBox="0 0 46 2"><rect x="0.0" y="0" width="1" height="1" fill="#5e5e5e"/><rect x="2.3" y="0" width="1" height="1" fill="#5e5e5e"/><rect x="4.6" y="0" width="1" height="1" fill="#5e5e5e"/><rect x="6.8999999999999995" y="0" width="1" height="1" fill="#5e5e5e"/><rect x="9.2" y="0" width="1" height="1" fill="#5e5e5e"/><rect x="11.5" y="0" width="1" height="1" fill="#5e5e5e"/><rect x="13.799999999999999" y="0" width="1" height="1" fill="#5e5e5e"/><rect x="16.099999999999998" y="0" width="1" height="1" fill="#5e5e5e"/><rect x="18.4" y="0" width="1" height="1" fill="#5e5e5e"/><rect x="20.7" y="0" width="1" height="1" fill="#5e5e5e"/><rect x="23.0" y="0" width="1" height="1" fill="#5e5e5e"/><rect x="25.299999999999997" y="0" width="1" height="1" fill="#5e5e5e"/><rect x="27.599999999999998" y="0" width="1" height="1" fill="#5e5e5e"/><rect x="29.9" y="0" width="1" height="1" fill="#5e5e5e"/><rect x="32.199999999999996" y="0" width="1" height="1" fill="#5e5e5e"/><rect x="34.5" y="0" width="1" height="1" fill="#5e5e5e"/><rect x="36.8" y="0" width="1" height="1" fill="#5e5e5e"/><rect x="39.099999999999994" y="0" width="1" height="1" fill="#5e5e5e"/><rect x="41.4" y="0" width="1" height="1" fill="#5e5e5e"/><rect x="43.699999999999996" y="0" width="1" height="1" fill="#5e5e5e"/></svg>
<div style="left:878px;top:362px;width:136px;height:115px;background:#3a3a3a;border:1px solid #4a4a4a;box-sizing:border-box"></div>
<div style="left:879px;top:363px;width:31px;height:9px;background:#4a4a4a;border-radius:2px 2px 0 0"></div>
<span class="t" style="left:884px;top:364.8px;font-size:6.6px;color:#d8d8d8;font-weight:bold;transform:scaleX(0.767);">Display</span>
<div style="left:910.6px;top:363.5px;width:25.6px;height:8.5px;background:#404040;border-radius:2px 2px 0 0"></div>
<span class="t" style="left:917px;top:364.8px;font-size:6.6px;color:#777777;transform:scaleX(0.831);">Anim</span>
<div style="left:878px;top:372px;width:136px;height:24px;background:#444444;"></div>
<span class="t" style="left:883px;top:375.5px;font-size:6.6px;color:#cdcdcd;transform:scaleX(0.959);">Layers</span>
<span class="t" style="left:908px;top:375.5px;font-size:6.6px;color:#cdcdcd;transform:scaleX(0.967);">Options</span>
<span class="t" style="left:938.5px;top:375.5px;font-size:6.6px;color:#cdcdcd;transform:scaleX(0.921);">Help</span>
<svg style="left:962px;top:386px;" width="8" height="7" viewBox="0 0 8 7"><path d="M0 3.5 L4 0.5 V6.5Z" fill="#d0d0d0"/><rect x="3" y="2" width="2.5" height="3" fill="#d0d0d0"/><path d="M6.5 6 V2.5 M5 3.5 L6.5 1.5 L8 3.5" stroke="#3ab4c8" stroke-width="1"/></svg>
<svg style="left:974px;top:386px;" width="8" height="7" viewBox="0 0 8 7"><path d="M0 3.5 L4 0.5 V6.5Z" fill="#d0d0d0"/><rect x="3" y="2" width="2.5" height="3" fill="#d0d0d0"/><path d="M6.5 1 V4.5 M5 3.5 L6.5 5.5 L8 3.5" stroke="#3ab4c8" stroke-width="1"/></svg>
<svg style="left:988px;top:386px;" width="8" height="7" viewBox="0 0 8 7"><path d="M0 3.5 L4 0.5 V6.5Z" fill="#d0d0d0"/><rect x="3" y="2" width="2.5" height="3" fill="#d0d0d0"/><path d="M6.5 0.5 V4 M4.8 2.2 H8.2" stroke="#3ab4c8" stroke-width="1"/></svg>
<svg style="left:1001px;top:386px;" width="8" height="7" viewBox="0 0 8 7"><path d="M0 3.5 L4 0.5 V6.5Z" fill="#d0d0d0"/><rect x="3" y="2" width="2.5" height="3" fill="#d0d0d0"/><circle cx="6.5" cy="2" r="1.8" fill="#3ab4c8"/></svg>
<div style="left:880px;top:397px;width:132px;height:71px;background:#2b2b2b;"></div>
<div style="left:880px;top:468px;width:132px;height:7px;background:#2b2b2b;"></div>
<svg style="left:881px;top:469px;" width="4" height="5" viewBox="0 0 4 5"><path d="M3.5 0 V5 L0.5 2.5Z" fill="#d0d0d0"/></svg>
<svg style="left:1007px;top:469px;" width="4" height="5" viewBox="0 0 4 5"><path d="M0.5 0 V5 L3.5 2.5Z" fill="#d0d0d0"/></svg>
<div style="left:887px;top:469px;width:82px;height:5px;background:#5a5a5a;border-radius:2.5px"></div>
<div style="left:0px;top:478px;width:1024px;height:2px;background:#363636;"></div>
<div style="left:0px;top:480px;width:1024px;height:21px;background:#444444;"></div>
<svg style="left:1px;top:482px;" width="4" height="17" viewBox="0 0 4 17"><rect x="0" y="0.0" width="1" height="1" fill="#5a5a5a"/><rect x="0" y="2.5" width="1" height="1" fill="#5a5a5a"/><rect x="0" y="5.0" width="1" height="1" fill="#5a5a5a"/><rect x="0" y="7.5" width="1" height="1" fill="#5a5a5a"/><rect x="0" y="10.0" width="1" height="1" fill="#5a5a5a"/><rect x="0" y="12.5" width="1" height="1" fill="#5a5a5a"/><rect x="2" y="0.0" width="1" height="1" fill="#5a5a5a"/><rect x="2" y="2.5" width="1" height="1" fill="#5a5a5a"/><rect x="2" y="5.0" width="1" height="1" fill="#5a5a5a"/><rect x="2" y="7.5" width="1" height="1" fill="#5a5a5a"/><rect x="2" y="10.0" width="1" height="1" fill="#5a5a5a"/><rect x="2" y="12.5" width="1" height="1" fill="#5a5a5a"/></svg>
<div style="left:7px;top:482px;width:860px;height:17px;background:#2b2b2b;"></div>
<div style="left:11.4px;top:482.4px;width:7.3px;height:17px;background:#555555;"></div>
<svg style="left:0;top:0" width="1024" height="539" viewBox="0 0 1024 539"><text x="13.0" y="487.3" font-size="5.6" fill="#8a8a8a" font-family="Liberation Sans">0</text><rect x="27.8" y="489.5" width="1" height="7.8" fill="#8c8c8c"/><text x="29.9" y="487.3" font-size="5.6" fill="#8a8a8a" font-family="Liberation Sans">2</text><rect x="44.7" y="489.5" width="1" height="7.8" fill="#8c8c8c"/><text x="46.8" y="487.3" font-size="5.6" fill="#8a8a8a" font-family="Liberation Sans">4</text><rect x="61.5" y="489.5" width="1" height="7.8" fill="#8c8c8c"/><text x="63.6" y="487.3" font-size="5.6" fill="#8a8a8a" font-family="Liberation Sans">6</text><rect x="78.4" y="489.5" width="1" height="7.8" fill="#8c8c8c"/><text x="80.5" y="487.3" font-size="5.6" fill="#8a8a8a" font-family="Liberation Sans">8</text><rect x="95.2" y="489.5" width="1" height="7.8" fill="#8c8c8c"/><text x="97.3" y="487.3" font-size="5.6" fill="#8a8a8a" font-family="Liberation Sans">10</text><rect x="112.1" y="489.5" width="1" height="7.8" fill="#8c8c8c"/><text x="114.2" y="487.3" font-size="5.6" fill="#8a8a8a" font-family="Liberation Sans">12</text><rect x="128.9" y="489.5" width="1" height="7.8" fill="#8c8c8c"/><text x="131.0" y="487.3" font-size="5.6" fill="#8a8a8a" font-family="Liberation Sans">14</text><rect x="145.8" y="489.5" width="1" height="7.8" fill="#8c8c8c"/><text x="147.9" y="487.3" font-size="5.6" fill="#8a8a8a" font-family="Liberation Sans">16</text><rect x="162.6" y="489.5" width="1" height="7.8" fill="#8c8c8c"/><text x="164.7" y="487.3" font-size="5.6" fill="#8a8a8a" font-family="Liberation Sans">18</text><rect x="179.5" y="489.5" width="1" height="7.8" fill="#8c8c8c"/><text x="181.6" y="487.3" font-size="5.6" fill="#8a8a8a" font-family="Liberation Sans">20</text><rect x="196.4" y="489.5" width="1" height="7.8" fill="#8c8c8c"/><text x="198.5" y="487.3" font-size="5.6" fill="#8a8a8a" font-family="Liberation Sans">22</text><rect x="213.2" y="489.5" width="1" height="7.8" fill="#8c8c8c"/><text x="215.3" y="487.3" font-size="5.6" fill="#8a8a8a" font-family="Liberation Sans">24</text><rect x="230.1" y="489.5" width="1" height="7.8" fill="#8c8c8c"/><text x="232.2" y="487.3" font-size="5.6" fill="#8a8a8a" font-family="Liberation Sans">26</text><rect x="246.9" y="489.5" width="1" height="7.8" fill="#8c8c8c"/><text x="249.0" y="487.3" font-size="5.6" fill="#8a8a8a" font-family="Liberation Sans">28</text><rect x="263.8" y="489.5" width="1" height="7.8" fill="#8c8c8c"/><text x="265.9" y="487.3" font-size="5.6" fill="#8a8a8a" font-family="Liberation Sans">30</text><rect x="280.6" y="489.5" width="1" height="7.8" fill="#8c8c8c"/><text x="282.7" y="487.3" font-size="5.6" fill="#8a8a8a" font-family="Liberation Sans">32</text><rect x="297.5" y="489.5" width="1" height="7.8" fill="#8c8c8c"/><text x="299.6" y="487.3" font-size="5.6" fill="#8a8a8a" font-family="Liberation Sans">34</text><rect x="314.3" y="489.5" width="1" height="7.8" fill="#8c8c8c"/><text x="316.4" y="487.3" font-size="5.6" fill="#8a8a8a" font-family="Liberation Sans">36</text><rect x="331.2" y="489.5" width="1" height="7.8" fill="#8c8c8c"/><text x="333.3" y="487.3" font-size="5.6" fill="#8a8a8a" font-family="Liberation Sans">38</text><rect x="348.1" y="489.5" width="1" height="7.8" fill="#8c8c8c"/><text x="350.2" y="487.3" font-size="5.6" fill="#8a8a8a" font-family="Liberation Sans">40</text><rect x="364.9" y="489.5" width="1" height="7.8" fill="#8c8c8c"/><text x="367.0" y="487.3" font-size="5.6" fill="#8a8a8a" font-family="Liberation Sans">42</text><rect x="381.8" y="489.5" width="1" height="7.8" fill="#8c8c8c"/><text x="383.9" y="487.3" font-size="5.6" fill="#8a8a8a" font-family="Liberation Sans">44</text><rect x="398.6" y="489.5" width="1" height="7.8" fill="#8c8c8c"/><text x="400.7" y="487.3" font-size="5.6" fill="#8a8a8a" font-family="Liberation Sans">46</text><rect x="415.5" y="489.5" width="1" height="7.8" fill="#8c8c8c"/><text x="417.6" y="487.3" font-size="5.6" fill="#8a8a8a" font-family="Liberation Sans">48</text><rect x="432.3" y="489.5" width="1" height="7.8" fill="#8c8c8c"/><text x="434.4" y="487.3" font-size="5.6" fill="#8a8a8a" font-family="Liberation Sans">50</text><rect x="449.2" y="489.5" width="1" height="7.8" fill="#8c8c8c"/><text x="451.3" y="487.3" font-size="5.6" fill="#8a8a8a" font-family="Liberation Sans">52</text><rect x="466.1" y="489.5" width="1" height="7.8" fill="#8c8c8c"/><text x="468.2" y="487.3" font-size="5.6" fill="#8a8a8a" font-family="Liberation Sans">54</text><rect x="482.9" y="489.5" width="1" height="7.8" fill="#8c8c8c"/><text x="485.0" y="487.3" font-size="5.6" fill="#8a8a8a" font-family="Liberation Sans">56</text><rect x="499.8" y="489.5" width="1" height="7.8" fill="#8c8c8c"/><text x="501.9" y="487.3" font-size="5.6" fill="#8a8a8a" font-family="Liberation Sans">58</text><rect x="516.6" y="489.5" width="1" height="7.8" fill="#8c8c8c"/><text x="518.7" y="487.3" font-size="5.6" fill="#8a8a8a" font-family="Liberation Sans">60</text><rect x="533.5" y="489.5" width="1" height="7.8" fill="#8c8c8c"/><text x="535.6" y="487.3" font-size="5.6" fill="#8a8a8a" font-family="Liberation Sans">62</text><rect x="550.3" y="489.5" width="1" height="7.8" fill="#8c8c8c"/><text x="552.4" y="487.3" font-size="5.6" fill="#8a8a8a" font-family="Liberation Sans">64</text><rect x="567.2" y="489.5" width="1" height="7.8" fill="#8c8c8c"/><text x="569.3" y="487.3" font-size="5.6" fill="#8a8a8a" font-family="Liberation Sans">66</text><rect x="584.0" y="489.5" width="1" height="7.8" fill="#8c8c8c"/><text x="586.1" y="487.3" font-size="5.6" fill="#8a8a8a" font-family="Liberation Sans">68</text><rect x="600.9" y="489.5" width="1" height="7.8" fill="#8c8c8c"/><text x="603.0" y="487.3" font-size="5.6" fill="#8a8a8a" font-family="Liberation Sans">70</text><rect x="617.8" y="489.5" width="1" height="7.8" fill="#8c8c8c"/><text x="619.9" y="487.3" font-size="5.6" fill="#8a8a8a" font-family="Liberation Sans">72</text><rect x="634.6" y="489.5" width="1" height="7.8" fill="#8c8c8c"/><text x="636.7" y="487.3" font-size="5.6" fill="#8a8a8a" font-family="Liberation Sans">74</text><rect x="651.5" y="489.5" width="1" height="7.8" fill="#8c8c8c"/><text x="653.6" y="487.3" font-size="5.6" fill="#8a8a8a" font-family="Liberation Sans">76</text><rect x="668.3" y="489.5" width="1" height="7.8" fill="#8c8c8c"/><text x="670.4" y="487.3" font-size="5.6" fill="#8a8a8a" font-family="Liberation Sans">78</text><rect x="685.2" y="489.5" width="1" height="7.8" fill="#8c8c8c"/><text x="687.3" y="487.3" font-size="5.6" fill="#8a8a8a" font-family="Liberation Sans">80</text><rect x="702.0" y="489.5" width="1" height="7.8" fill="#8c8c8c"/><text x="704.1" y="487.3" font-size="5.6" fill="#8a8a8a" font-family="Liberation Sans">82</text><rect x="718.9" y="489.5" width="1" height="7.8" fill="#8c8c8c"/><text x="721.0" y="487.3" font-size="5.6" fill="#8a8a8a" font-family="Liberation Sans">84</text><rect x="735.7" y="489.5" width="1" height="7.8" fill="#8c8c8c"/><text x="737.8" y="487.3" font-size="5.6" fill="#8a8a8a" font-family="Liberation Sans">86</text><rect x="752.6" y="489.5" width="1" height="7.8" fill="#8c8c8c"/><text x="754.7" y="487.3" font-size="5.6" fill="#8a8a8a" font-family="Liberation Sans">88</text><rect x="769.5" y="489.5" width="1" height="7.8" fill="#8c8c8c"/><text x="771.6" y="487.3" font-size="5.6" fill="#8a8a8a" font-family="Liberation Sans">90</text><rect x="786.3" y="489.5" width="1" height="7.8" fill="#8c8c8c"/><text x="788.4" y="487.3" font-size="5.6" fill="#8a8a8a" font-family="Liberation Sans">92</text><rect x="803.2" y="489.5" width="1" height="7.8" fill="#8c8c8c"/><text x="805.3" y="487.3" font-size="5.6" fill="#8a8a8a" font-family="Liberation Sans">94</text><rect x="820.0" y="489.5" width="1" height="7.8" fill="#8c8c8c"/><text x="822.1" y="487.3" font-size="5.6" fill="#8a8a8a" font-family="Liberation Sans">96</text><rect x="836.9" y="489.5" width="1" height="7.8" fill="#8c8c8c"/><text x="839.0" y="487.3" font-size="5.6" fill="#8a8a8a" font-family="Liberation Sans">98</text><rect x="853.7" y="489.5" width="1" height="7.8" fill="#8c8c8c"/><text x="855.8" y="487.3" font-size="5.6" fill="#8a8a8a" font-family="Liberation Sans">100</text><rect x="11.5" y="489.5" width="1" height="7.8" fill="#8c8c8c"/></svg>
<span class="t" style="left:13.2px;top:490.2px;font-size:6.4px;color:#f0f0f0;font-weight:bold;">0</span>
<div style="left:871px;top:486.2px;width:47px;height:8.6px;background:#2b2b2b;"></div>
<span class="t" style="left:873px;top:488.3px;font-size:5.8px;color:#d0d0d0;">0</span>
<svg style="left:922.5px;top:486.9px;" width="10" height="8" viewBox="0 0 10 8"><rect x="0" y="0.5" width="1.2" height="6.5" fill="#aaa"/><path d="M5.5 0.5 V7 L1.8 3.75Z M9.5 0.5 V7 L5.8 3.75Z" fill="#c4c4c4"/></svg>
<svg style="left:935.8px;top:486.9px;" width="8" height="8" viewBox="0 0 8 8"><rect x="0" y="0.5" width="1.5" height="6.5" fill="#999"/><path d="M7.4 0 V7.5 L2 3.75Z" fill="#c4c4c4"/></svg>
<svg style="left:948px;top:486.9px;" width="8" height="8" viewBox="0 0 8 8"><rect x="0" y="-2" width="2" height="10" fill="#e07a2a"/><path d="M7.5 0 V7.5 L2.5 3.75Z" fill="#c4c4c4"/></svg>
<svg style="left:960.8px;top:485.9px;" width="8" height="8" viewBox="0 0 8 8"><path d="M7 0 V8 L0.5 4Z" fill="#c4c4c4"/></svg>
<svg style="left:973px;top:485.9px;" width="8" height="8" viewBox="0 0 8 8"><path d="M0 0 V8 L7 4Z" fill="#c4c4c4"/></svg>
<svg style="left:985.3px;top:486.9px;" width="8" height="8" viewBox="0 0 8 8"><path d="M0.5 0 V7.5 L5.5 3.75Z" fill="#c4c4c4"/><rect x="6" y="-2" width="2" height="10" fill="#e07a2a"/></svg>
<svg style="left:998px;top:486.9px;" width="7" height="8" viewBox="0 0 7 8"><path d="M0.5 0 V7.5 L5.5 3.75Z" fill="#c4c4c4"/><rect x="5.5" y="0.5" width="1.2" height="6.5" fill="#aaa"/></svg>
<svg style="left:1008.7px;top:486.9px;" width="10" height="8" viewBox="0 0 10 8"><path d="M0.5 0.5 V7 L4.2 3.75Z M4.5 0.5 V7 L8.2 3.75Z" fill="#c4c4c4"/><rect x="8.5" y="0.5" width="1.2" height="6.5" fill="#aaa"/></svg>
<div style="left:0px;top:501px;width:1024px;height:1px;background:#383838;"></div>
<div style="left:0px;top:502px;width:1024px;height:20px;background:#444444;"></div>
<svg style="left:1px;top:504px;" width="4" height="16" viewBox="0 0 4 16"><rect x="0" y="0.0" width="1" height="1" fill="#5a5a5a"/><rect x="0" y="2.5" width="1" height="1" fill="#5a5a5a"/><rect x="0" y="5.0" width="1" height="1" fill="#5a5a5a"/><rect x="0" y="7.5" width="1" height="1" fill="#5a5a5a"/><rect x="0" y="10.0" width="1" height="1" fill="#5a5a5a"/><rect x="0" y="12.5" width="1" height="1" fill="#5a5a5a"/><rect x="2" y="0.0" width="1" height="1" fill="#5a5a5a"/><rect x="2" y="2.5" width="1" height="1" fill="#5a5a5a"/><rect x="2" y="5.0" width="1" height="1" fill="#5a5a5a"/><rect x="2" y="7.5" width="1" height="1" fill="#5a5a5a"/><rect x="2" y="10.0" width="1" height="1" fill="#5a5a5a"/><rect x="2" y="12.5" width="1" height="1" fill="#5a5a5a"/></svg>
<div style="left:7px;top:505.5px;width:47px;height:13px;background:#2b2b2b;"></div>
<span class="t" style="left:10px;top:509.3px;font-size:6.8px;color:#c8c8c8;">0</span>
<div style="left:59px;top:505.5px;width:46.5px;height:13px;background:#2b2b2b;"></div>
<span class="t" style="left:62px;top:509.3px;font-size:6.8px;color:#c8c8c8;">0</span>
<div style="left:112px;top:505px;width:485px;height:13px;background:#5e5e5e;border-radius:2px"></div>
<div style="left:113.5px;top:506.5px;width:8px;height:10px;background:#8a8a8a;border-radius:2px"></div>
<span class="t" style="left:124px;top:509.3px;font-size:6.8px;color:#d0d0d0;">0</span>
<div style="left:588px;top:506.5px;width:8px;height:10px;background:#8a8a8a;border-radius:2px"></div>
<span class="t" style="left:576px;top:509.3px;font-size:6.8px;color:#d0d0d0;transform:scaleX(0.926);">100</span>
<div style="left:604px;top:505.5px;width:47px;height:13px;background:#2b2b2b;"></div>
<span class="t" style="left:607px;top:509.3px;font-size:6.8px;color:#c8c8c8;transform:scaleX(0.970);">100</span>
<div style="left:655px;top:505.5px;width:47px;height:13px;background:#2b2b2b;"></div>
<span class="t" style="left:658px;top:509.3px;font-size:6.8px;color:#c8c8c8;transform:scaleX(0.970);">100</span>
<div style="left:704.5px;top:507px;width:1px;height:9px;background:#8a8a8a;"></div>
<svg style="left:713px;top:506px;" width="9" height="11" viewBox="0 0 9 11"><path d="M1 1 H6 V10 L3.5 7.5 L1 10Z" fill="#e0702a"/><path d="M6.5 0.5 V4.5 M4.5 2.5 H8.5" stroke="#ddd" stroke-width="1"/></svg>
<div style="left:727.5px;top:507px;width:1px;height:9px;background:#8a8a8a;"></div>
<svg style="left:736px;top:509px;" width="5" height="4" viewBox="0 0 5 4"><path d="M0 0 H5 L2.5 3.5Z" fill="#8a8a8a"/></svg>
<div style="left:746px;top:505px;width:54px;height:13px;background:#4a4a4a;border:1px solid #3c3c3c;box-sizing:border-box"></div>
<span class="t" style="left:749px;top:508.5px;font-size:6.6px;color:#c4c4c4;transform:scaleX(0.902);">No Character Set</span>
<svg style="left:806px;top:509px;" width="5" height="4" viewBox="0 0 5 4"><path d="M0 0 H5 L2.5 3.5Z" fill="#8a8a8a"/></svg>
<div style="left:814px;top:505px;width:54px;height:13px;background:#4a4a4a;border:1px solid #3c3c3c;box-sizing:border-box"></div>
<span class="t" style="left:817.5px;top:508.5px;font-size:6.6px;color:#c4c4c4;transform:scaleX(0.878);">No Anim Layer</span>
<div style="left:873.5px;top:507px;width:1px;height:9px;background:#8a8a8a;"></div>
<div style="left:881px;top:506px;width:51px;height:11px;background:#555555;"></div>
<div style="left:922px;top:506px;width:10px;height:11px;background:#5a5a5a;"></div>
<span class="t" style="left:883.5px;top:508.5px;font-size:6.6px;color:#c4c4c4;transform:scaleX(0.890);">30 fps</span>
<svg style="left:924.5px;top:509.5px;" width="5" height="4" viewBox="0 0 5 4"><path d="M0 0 H5 L2.5 3.5Z" fill="#d0d0d0"/></svg>
<svg style="left:941px;top:507px;" width="9" height="8" viewBox="0 0 9 8"><path d="M2 2 H7 A2 2 0 0 1 7 6 H2 A2 2 0 0 1 2 2" stroke="#ddd" stroke-width="1.2" fill="none"/></svg>
<div style="left:954px;top:505px;width:12px;height:12px;background:#4a87b0;"></div>
<svg style="left:955px;top:507px;" width="10" height="8" viewBox="0 0 10 8"><rect x="0.5" y="1.5" width="9" height="5.5" fill="#e0702a"/><path d="M2 4 H8" stroke="#444" stroke-width="0.8"/><path d="M6 0 L9 3 L8 3.5" fill="#ddd"/></svg>
<div style="left:971px;top:507px;width:1px;height:9px;background:#8a8a8a;"></div>
<svg style="left:979px;top:507px;" width="9" height="8" viewBox="0 0 9 8"><path d="M0.5 2.5 H2.5 L5 0.5 V7.5 L2.5 5.5 H0.5Z" fill="#ccc"/><path d="M6.5 2 Q8 4 6.5 6" stroke="#ccc" stroke-width="0.8" fill="none"/></svg>
<svg style="left:992px;top:506px;" width="9" height="10" viewBox="0 0 9 10"><circle cx="4.5" cy="5" r="4" stroke="#ccc" stroke-width="0.9" fill="none" stroke-dasharray="5 1.5"/><rect x="3.8" y="2.5" width="1.5" height="4" fill="#e0702a"/></svg>
<svg style="left:1008px;top:505px;" width="10" height="11" viewBox="0 0 10 11"><circle cx="2.5" cy="2" r="1.8" fill="none" stroke="#ccc" stroke-width="0.7"/><path d="M5 4 L7 3 L8.5 5 L6 6.5 L7.5 10 M6 6.5 L3.5 9 M7 3 L9 6" stroke="#e0702a" stroke-width="1.3" fill="none"/><circle cx="7.5" cy="2.5" r="1.3" fill="#e0702a"/></svg>
<div style="left:0px;top:521px;width:1024px;height:1px;background:#383838;"></div>
<div style="left:0px;top:522px;width:1024px;height:17px;background:#444444;"></div>
<svg style="left:1px;top:523px;" width="4" height="15" viewBox="0 0 4 15"><rect x="0" y="0.0" width="1" height="1" fill="#5a5a5a"/><rect x="0" y="2.5" width="1" height="1" fill="#5a5a5a"/><rect x="0" y="5.0" width="1" height="1" fill="#5a5a5a"/><rect x="0" y="7.5" width="1" height="1" fill="#5a5a5a"/><rect x="0" y="10.0" width="1" height="1" fill="#5a5a5a"/><rect x="0" y="12.5" width="1" height="1" fill="#5a5a5a"/><rect x="2" y="0.0" width="1" height="1" fill="#5a5a5a"/><rect x="2" y="2.5" width="1" height="1" fill="#5a5a5a"/><rect x="2" y="5.0" width="1" height="1" fill="#5a5a5a"/><rect x="2" y="7.5" width="1" height="1" fill="#5a5a5a"/><rect x="2" y="10.0" width="1" height="1" fill="#5a5a5a"/><rect x="2" y="12.5" width="1" height="1" fill="#5a5a5a"/></svg>
<svg style="left:7.5px;top:526.9px;" width="9" height="9" viewBox="0 0 9 9"><circle cx="4.3" cy="4.3" r="4.3" fill="#7ab82e"/><text x="4.3" y="7.1" font-size="7" fill="#2a3a10" text-anchor="middle" font-weight="bold" font-family="Liberation Sans">?</text></svg>
<span class="t" style="left:20px;top:529.2px;font-size:6.6px;color:#d0d0d0;transform:scaleX(0.803);">Move Tool: Select an object to move.</span>
<div style="left:435px;top:522px;width:1px;height:17px;background:#3a3a3a;"></div>
<svg style="left:437px;top:523px;" width="4" height="15" viewBox="0 0 4 15"><rect x="0" y="0.0" width="1" height="1" fill="#5a5a5a"/><rect x="0" y="2.5" width="1" height="1" fill="#5a5a5a"/><rect x="0" y="5.0" width="1" height="1" fill="#5a5a5a"/><rect x="0" y="7.5" width="1" height="1" fill="#5a5a5a"/><rect x="0" y="10.0" width="1" height="1" fill="#5a5a5a"/><rect x="0" y="12.5" width="1" height="1" fill="#5a5a5a"/><rect x="2" y="0.0" width="1" height="1" fill="#5a5a5a"/><rect x="2" y="2.5" width="1" height="1" fill="#5a5a5a"/><rect x="2" y="5.0" width="1" height="1" fill="#5a5a5a"/><rect x="2" y="7.5" width="1" height="1" fill="#5a5a5a"/><rect x="2" y="10.0" width="1" height="1" fill="#5a5a5a"/><rect x="2" y="12.5" width="1" height="1" fill="#5a5a5a"/></svg>
<span class="t" style="left:449px;top:528.6px;font-size:6.6px;color:#d8d8d8;font-weight:bold;transform:scaleX(0.790);">MEL</span>
<div style="left:468px;top:525.2px;width:218px;height:11.4px;background:#2b2b2b;border-radius:2px"></div>
<svg style="left:688px;top:524px;" width="2" height="13" viewBox="0 0 2 13"><rect x="0" y="0.0" width="1" height="1" fill="#5a5a5a"/><rect x="0" y="2.5" width="1" height="1" fill="#5a5a5a"/><rect x="0" y="5.0" width="1" height="1" fill="#5a5a5a"/><rect x="0" y="7.5" width="1" height="1" fill="#5a5a5a"/><rect x="0" y="10.0" width="1" height="1" fill="#5a5a5a"/></svg>
<div style="left:690px;top:525.2px;width:317px;height:11.4px;background:#2b2b2b;border-radius:2px"></div>
<svg style="left:1010px;top:525px;" width="10" height="10" viewBox="0 0 10 10"><rect x="0.5" y="0.5" width="9" height="9" fill="#777" stroke="#aaa" stroke-width="0.6"/><rect x="2.5" y="3" width="5" height="5" fill="none" stroke="#ddd" stroke-width="0.8"/><path d="M0.5 2 H9.5" stroke="#ddd"/></svg>
</body></html>
